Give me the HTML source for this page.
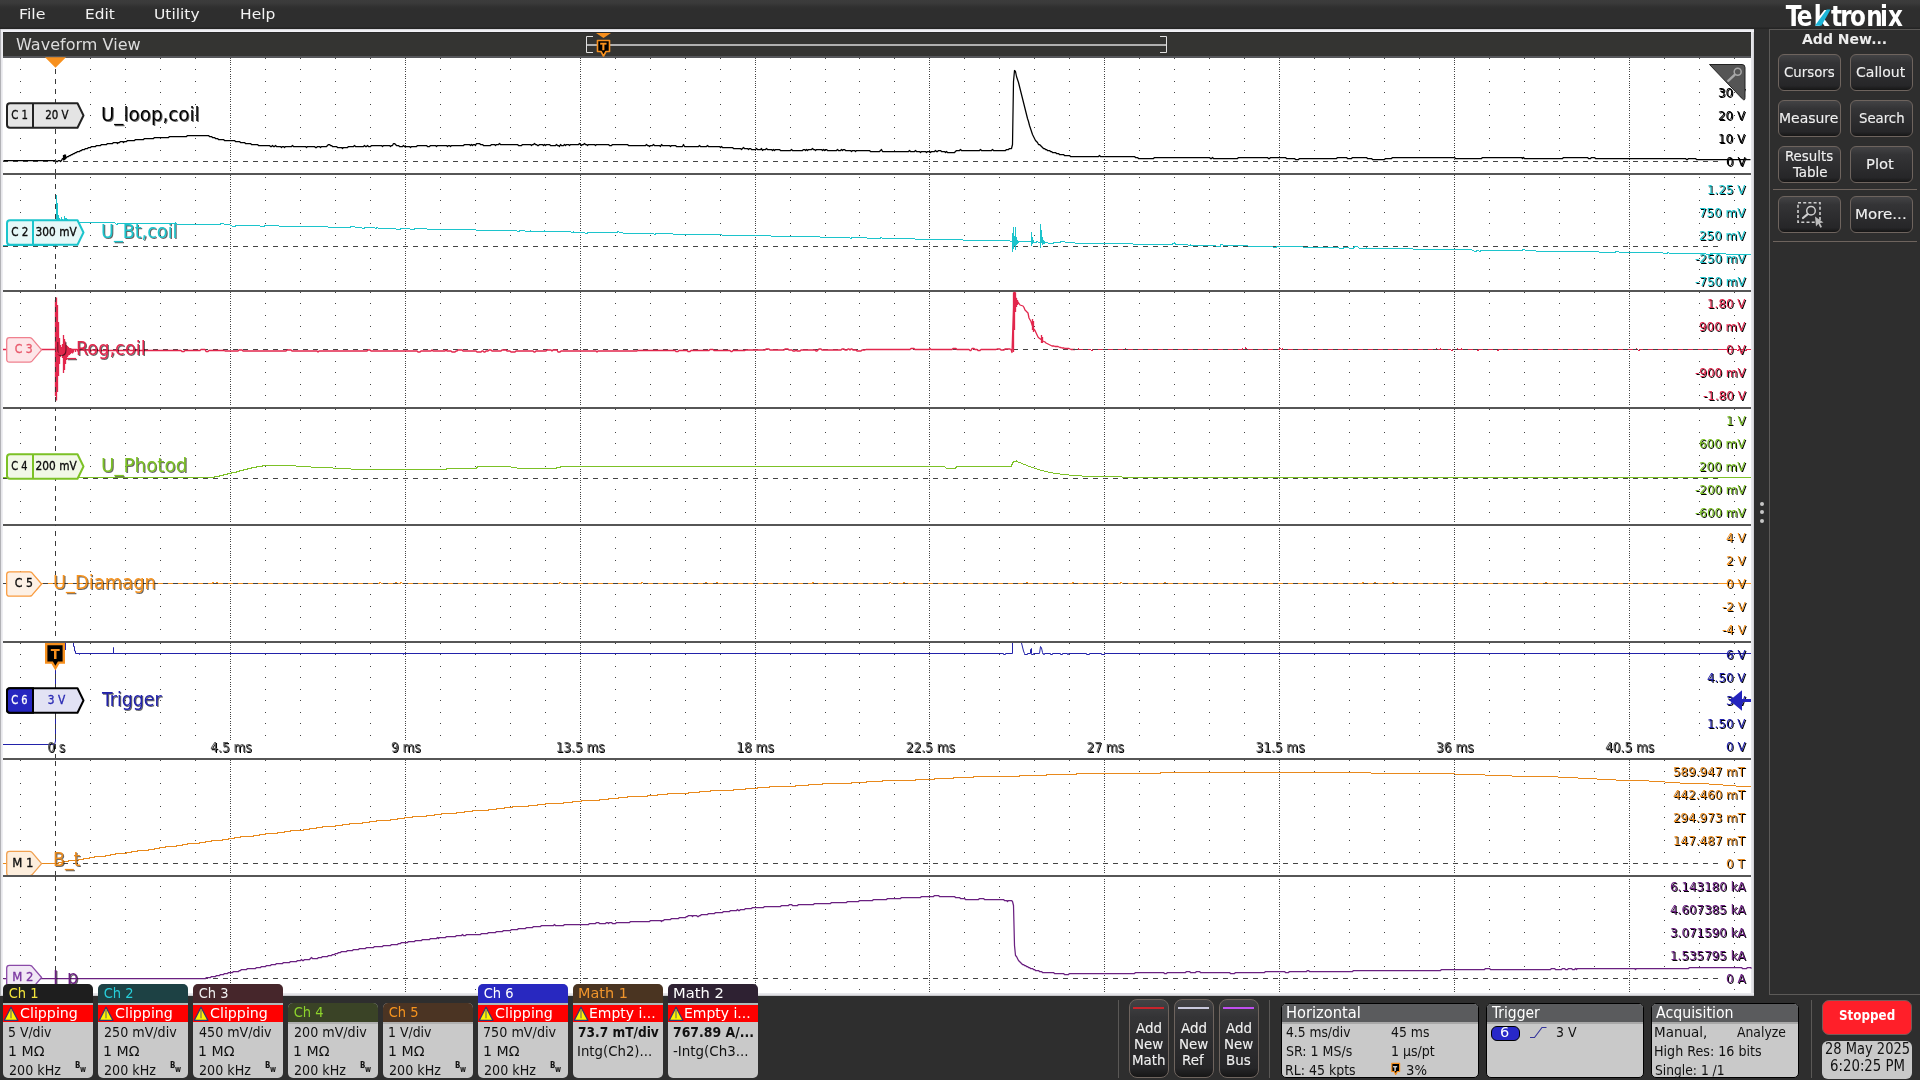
<!DOCTYPE html>
<html lang="en"><head><meta charset="utf-8"><title>Tektronix Waveform View</title>
<style>
html,body{margin:0;padding:0;background:#2e2e2e}
body{width:1920px;height:1080px;position:relative;overflow:hidden;font-family:'DejaVu Sans Condensed','DejaVu Sans','Liberation Sans',sans-serif}
.t{position:absolute;white-space:nowrap;line-height:1;transform-origin:0 0;display:block}
.tl{position:absolute;left:0;top:0;width:1920px;height:1080px;will-change:transform;pointer-events:none}
.abs{position:absolute}
svg.ov{position:absolute;left:0;top:0;width:1920px;height:1080px;pointer-events:none;will-change:transform}
#menubar{position:absolute;left:0;top:0;width:1920px;height:29px;background:linear-gradient(#3c3c3c 0,#3a3a3a 3px,#303030 7px,#2e2e2e 10px,#2e2e2e 27px,#232323 28px,#262626 29px)}
#wfv{position:absolute;left:0;top:29px;width:1754px;height:967px;background:linear-gradient(90deg,#aeaeb2 0,#b6b6ba 1px,#e6e6ea 1.4px,#f2f2f6 3px,#e8e8ec 1751px,#e0e0e4 1753px,#c4c4c8 1754px)}
#wfv .edge-t{position:absolute;left:1px;top:0;width:1753px;height:3px;background:linear-gradient(#cfcfd3,#ececf0 45%,#f5f5f9)}
#wfv .edge-b{position:absolute;left:1px;top:964px;width:1753px;height:3px;background:linear-gradient(#ececf0,#e2e2e6 50%,#b8b8bc)}
#wfv .title{position:absolute;left:3px;top:3px;width:1748px;height:26px;background:#343432;border-top:1px solid #2a2a2a;border-bottom:2px solid #56575b;box-sizing:border-box}
#wfv .plot{position:absolute;left:3px;top:29px;width:1748px;height:935px;background:#fff}
#layers{position:absolute;left:0;top:0;width:1920px;height:993px;overflow:hidden}
#side{position:absolute;left:1769px;top:29px;width:160px;height:966px;box-sizing:border-box;border:1px solid #5c5a58;background:#2e2e2e}
.btn{position:absolute;box-sizing:border-box;border:1px solid #6e645e;border-radius:6px;background:linear-gradient(#434345 0,#343436 22%,#2c2c2e 60%,#262628 88%,#161616 100%)}
.hr{position:absolute;height:1px;background:#6e645e}
.vr{position:absolute;width:1px;background:#5a5856}
.chb{position:absolute;width:90px;border-radius:5px;overflow:hidden;background:#c9c9c9}
.chh{position:absolute;left:0;top:0;width:100%}
.chl{position:absolute;left:0;top:19px;width:100%;height:2px;background:#aebaba}
.chl2{position:absolute;left:0;top:19px;width:100%;height:2px;background:#b0b0b0}
.chw{position:absolute;left:0;top:21px;width:100%;height:17px;background:#ff0000}
.ib{position:absolute;box-sizing:border-box;border:1px solid #000;border-radius:5px;overflow:hidden;background:#c9c9c9}
.ib .h{position:absolute;left:0;top:0;width:100%;height:18px;background:#5a5b5d;border-bottom:2px solid #a8a8a8}
</style></head><body>
<div id="menubar"><div class="tl"><span class="t" style="left:18.91px;top:7.00px;font-size:14.5px;font-family:'DejaVu Sans','Liberation Sans',sans-serif;color:#f2f2f2;transform:scaleX(1.0924)">File</span><span class="t" style="left:84.94px;top:7.00px;font-size:14.5px;font-family:'DejaVu Sans','Liberation Sans',sans-serif;color:#f2f2f2;transform:scaleX(1.0586)">Edit</span><span class="t" style="left:153.93px;top:7.00px;font-size:14.5px;font-family:'DejaVu Sans','Liberation Sans',sans-serif;color:#f2f2f2;transform:scaleX(1.0697)">Utility</span><span class="t" style="left:239.93px;top:7.00px;font-size:14.5px;font-family:'DejaVu Sans','Liberation Sans',sans-serif;color:#f2f2f2;transform:scaleX(1.0674)">Help</span></div>
<svg class="ov" style="height:29px" viewBox="0 0 1920 29"><text transform="scale(0.88 1)" x="2029.26 2041.73 2061.07 2080.57 2091.18 2102.18 2120.73 2136.41 2145.45" y="25.7" font-family="DejaVu Sans Condensed, DejaVu Sans, Liberation Sans, sans-serif" font-weight="bold" font-size="29.2" fill="#fff">Tektronix</text><path d="M1814.9,25.8L1826.7,9.5H1830.6L1821.4,25.8Z" fill="#1cb5d8"/></svg>
</div>
<div id="wfv"><div class="edge-t"></div><div class="edge-b"></div><div class="title"></div><div class="tl"><span class="t" style="left:16.00px;top:8.50px;font-size:15.5px;font-family:'DejaVu Sans','Liberation Sans',sans-serif;color:#dcdcdc;transform:scaleX(1.0355)">Waveform View</span></div><div class="plot"></div></div>
<div id="layers">
<svg class="ov" viewBox="0 0 1920 1080"><defs><path id="mn" d="M0,58.5h1M0,69.5h1M0,81.5h1M0,92.5h1M0,104.5h1M0,115.5h1M0,127.5h1M0,138.5h1M0,150.5h1M0,177.5h1M0,189.5h1M0,200.5h1M0,212.5h1M0,223.5h1M0,235.5h1M0,258.5h1M0,269.5h1M0,281.5h1M0,292.5h1M0,303.5h1M0,315.5h1M0,326.5h1M0,338.5h1M0,361.5h1M0,372.5h1M0,384.5h1M0,395.5h1M0,409.5h1M0,420.5h1M0,432.5h1M0,443.5h1M0,455.5h1M0,466.5h1M0,489.5h1M0,501.5h1M0,512.5h1M0,537.5h1M0,548.5h1M0,560.5h1M0,571.5h1M0,594.5h1M0,606.5h1M0,617.5h1M0,629.5h1M0,643.5h1M0,654.5h1M0,666.5h1M0,677.5h1M0,689.5h1M0,700.5h1M0,712.5h1M0,723.5h1M0,735.5h1M0,760.5h1M0,771.5h1M0,783.5h1M0,794.5h1M0,806.5h1M0,817.5h1M0,829.5h1M0,840.5h1M0,852.5h1M0,886.5h1M0,897.5h1M0,909.5h1M0,920.5h1M0,932.5h1M0,943.5h1M0,955.5h1M0,966.5h1M0,989.5h1"/><path id="mj" d="M0,58.5h1M0,60.5h1M0,62.5h1M0,64.5h1M0,67.5h1M0,69.5h1M0,71.5h1M0,74.5h1M0,76.5h1M0,78.5h1M0,81.5h1M0,83.5h1M0,85.5h1M0,87.5h1M0,90.5h1M0,92.5h1M0,94.5h1M0,97.5h1M0,99.5h1M0,101.5h1M0,104.5h1M0,106.5h1M0,108.5h1M0,110.5h1M0,113.5h1M0,115.5h1M0,117.5h1M0,120.5h1M0,122.5h1M0,124.5h1M0,127.5h1M0,129.5h1M0,131.5h1M0,133.5h1M0,136.5h1M0,138.5h1M0,140.5h1M0,143.5h1M0,145.5h1M0,147.5h1M0,150.5h1M0,152.5h1M0,154.5h1M0,156.5h1M0,159.5h1M0,161.5h1M0,163.5h1M0,166.5h1M0,168.5h1M0,170.5h1M0,175.5h1M0,177.5h1M0,179.5h1M0,182.5h1M0,184.5h1M0,186.5h1M0,189.5h1M0,191.5h1M0,193.5h1M0,196.5h1M0,198.5h1M0,200.5h1M0,202.5h1M0,205.5h1M0,207.5h1M0,209.5h1M0,212.5h1M0,214.5h1M0,216.5h1M0,219.5h1M0,221.5h1M0,223.5h1M0,225.5h1M0,228.5h1M0,230.5h1M0,232.5h1M0,235.5h1M0,237.5h1M0,239.5h1M0,242.5h1M0,244.5h1M0,246.5h1M0,248.5h1M0,251.5h1M0,253.5h1M0,255.5h1M0,258.5h1M0,260.5h1M0,262.5h1M0,265.5h1M0,267.5h1M0,269.5h1M0,271.5h1M0,274.5h1M0,276.5h1M0,278.5h1M0,281.5h1M0,283.5h1M0,285.5h1M0,288.5h1M0,292.5h1M0,294.5h1M0,296.5h1M0,298.5h1M0,301.5h1M0,303.5h1M0,305.5h1M0,308.5h1M0,310.5h1M0,312.5h1M0,315.5h1M0,317.5h1M0,319.5h1M0,321.5h1M0,324.5h1M0,326.5h1M0,328.5h1M0,331.5h1M0,333.5h1M0,335.5h1M0,338.5h1M0,340.5h1M0,342.5h1M0,344.5h1M0,347.5h1M0,349.5h1M0,351.5h1M0,354.5h1M0,356.5h1M0,358.5h1M0,361.5h1M0,363.5h1M0,365.5h1M0,367.5h1M0,370.5h1M0,372.5h1M0,374.5h1M0,377.5h1M0,379.5h1M0,381.5h1M0,384.5h1M0,386.5h1M0,388.5h1M0,390.5h1M0,393.5h1M0,395.5h1M0,397.5h1M0,400.5h1M0,402.5h1M0,404.5h1M0,409.5h1M0,411.5h1M0,413.5h1M0,416.5h1M0,418.5h1M0,420.5h1M0,423.5h1M0,425.5h1M0,427.5h1M0,429.5h1M0,432.5h1M0,434.5h1M0,436.5h1M0,439.5h1M0,441.5h1M0,443.5h1M0,446.5h1M0,448.5h1M0,450.5h1M0,452.5h1M0,455.5h1M0,457.5h1M0,459.5h1M0,462.5h1M0,464.5h1M0,466.5h1M0,469.5h1M0,471.5h1M0,473.5h1M0,475.5h1M0,478.5h1M0,480.5h1M0,482.5h1M0,485.5h1M0,487.5h1M0,489.5h1M0,492.5h1M0,494.5h1M0,496.5h1M0,498.5h1M0,501.5h1M0,503.5h1M0,505.5h1M0,508.5h1M0,510.5h1M0,512.5h1M0,515.5h1M0,517.5h1M0,519.5h1M0,521.5h1M0,528.5h1M0,530.5h1M0,532.5h1M0,534.5h1M0,537.5h1M0,539.5h1M0,541.5h1M0,544.5h1M0,546.5h1M0,548.5h1M0,551.5h1M0,553.5h1M0,555.5h1M0,557.5h1M0,560.5h1M0,562.5h1M0,564.5h1M0,567.5h1M0,569.5h1M0,571.5h1M0,574.5h1M0,576.5h1M0,578.5h1M0,580.5h1M0,583.5h1M0,585.5h1M0,587.5h1M0,590.5h1M0,592.5h1M0,594.5h1M0,597.5h1M0,599.5h1M0,601.5h1M0,603.5h1M0,606.5h1M0,608.5h1M0,610.5h1M0,613.5h1M0,615.5h1M0,617.5h1M0,620.5h1M0,622.5h1M0,624.5h1M0,626.5h1M0,629.5h1M0,631.5h1M0,633.5h1M0,636.5h1M0,638.5h1M0,643.5h1M0,645.5h1M0,647.5h1M0,649.5h1M0,652.5h1M0,654.5h1M0,656.5h1M0,659.5h1M0,661.5h1M0,663.5h1M0,666.5h1M0,668.5h1M0,670.5h1M0,672.5h1M0,675.5h1M0,677.5h1M0,679.5h1M0,682.5h1M0,684.5h1M0,686.5h1M0,689.5h1M0,691.5h1M0,693.5h1M0,695.5h1M0,698.5h1M0,700.5h1M0,702.5h1M0,705.5h1M0,707.5h1M0,709.5h1M0,712.5h1M0,714.5h1M0,716.5h1M0,718.5h1M0,721.5h1M0,723.5h1M0,725.5h1M0,728.5h1M0,730.5h1M0,732.5h1M0,735.5h1M0,737.5h1M0,739.5h1M0,741.5h1M0,760.5h1M0,762.5h1M0,764.5h1M0,767.5h1M0,769.5h1M0,771.5h1M0,774.5h1M0,776.5h1M0,778.5h1M0,780.5h1M0,783.5h1M0,785.5h1M0,787.5h1M0,790.5h1M0,792.5h1M0,794.5h1M0,797.5h1M0,799.5h1M0,801.5h1M0,803.5h1M0,806.5h1M0,808.5h1M0,810.5h1M0,813.5h1M0,815.5h1M0,817.5h1M0,820.5h1M0,822.5h1M0,824.5h1M0,826.5h1M0,829.5h1M0,831.5h1M0,833.5h1M0,836.5h1M0,838.5h1M0,840.5h1M0,843.5h1M0,845.5h1M0,847.5h1M0,849.5h1M0,852.5h1M0,854.5h1M0,856.5h1M0,859.5h1M0,861.5h1M0,863.5h1M0,866.5h1M0,868.5h1M0,870.5h1M0,872.5h1M0,879.5h1M0,881.5h1M0,883.5h1M0,886.5h1M0,888.5h1M0,890.5h1M0,892.5h1M0,895.5h1M0,897.5h1M0,899.5h1M0,902.5h1M0,904.5h1M0,906.5h1M0,909.5h1M0,911.5h1M0,913.5h1M0,915.5h1M0,918.5h1M0,920.5h1M0,922.5h1M0,925.5h1M0,927.5h1M0,929.5h1M0,932.5h1M0,934.5h1M0,936.5h1M0,938.5h1M0,941.5h1M0,943.5h1M0,945.5h1M0,948.5h1M0,950.5h1M0,952.5h1M0,955.5h1M0,957.5h1M0,959.5h1M0,961.5h1M0,964.5h1M0,966.5h1M0,968.5h1M0,971.5h1M0,973.5h1M0,975.5h1M0,978.5h1M0,980.5h1M0,982.5h1M0,984.5h1M0,987.5h1M0,989.5h1M0,991.5h1"/></defs>
<g stroke="#444" stroke-width="1" fill="none" shape-rendering="crispEdges">
<use href="#mn" x="20"/>
<use href="#mn" x="90"/>
<use href="#mn" x="125"/>
<use href="#mn" x="160"/>
<use href="#mn" x="195"/>
<use href="#mn" x="265"/>
<use href="#mn" x="300"/>
<use href="#mn" x="335"/>
<use href="#mn" x="370"/>
<use href="#mn" x="440"/>
<use href="#mn" x="475"/>
<use href="#mn" x="510"/>
<use href="#mn" x="545"/>
<use href="#mn" x="615"/>
<use href="#mn" x="650"/>
<use href="#mn" x="685"/>
<use href="#mn" x="720"/>
<use href="#mn" x="790"/>
<use href="#mn" x="825"/>
<use href="#mn" x="859"/>
<use href="#mn" x="894"/>
<use href="#mn" x="964"/>
<use href="#mn" x="999"/>
<use href="#mn" x="1034"/>
<use href="#mn" x="1069"/>
<use href="#mn" x="1139"/>
<use href="#mn" x="1174"/>
<use href="#mn" x="1209"/>
<use href="#mn" x="1244"/>
<use href="#mn" x="1314"/>
<use href="#mn" x="1349"/>
<use href="#mn" x="1384"/>
<use href="#mn" x="1419"/>
<use href="#mn" x="1489"/>
<use href="#mn" x="1524"/>
<use href="#mn" x="1559"/>
<use href="#mn" x="1594"/>
<use href="#mn" x="1664"/>
<use href="#mn" x="1699"/>
<use href="#mn" x="1734"/>
<use href="#mj" x="230"/>
<use href="#mj" x="405"/>
<use href="#mj" x="580"/>
<use href="#mj" x="755"/>
<use href="#mj" x="929"/>
<use href="#mj" x="1104"/>
<use href="#mj" x="1279"/>
<use href="#mj" x="1454"/>
<use href="#mj" x="1629"/>
</g>
<rect x="3" y="173" width="1748" height="2" fill="#565656"/>
<rect x="3" y="290" width="1748" height="2" fill="#565656"/>
<rect x="3" y="407" width="1748" height="2" fill="#565656"/>
<rect x="3" y="524" width="1748" height="2" fill="#565656"/>
<rect x="3" y="641" width="1748" height="2" fill="#565656"/>
<rect x="3" y="758" width="1748" height="2" fill="#565656"/>
<rect x="3" y="875" width="1748" height="2" fill="#565656"/>
<path d="M3,161.5H1718" stroke="#444" stroke-width="1" stroke-dasharray="5 5" fill="none" shape-rendering="crispEdges"/>
<path d="M3,246.5H1718" stroke="#444" stroke-width="1" stroke-dasharray="5 5" fill="none" shape-rendering="crispEdges"/>
<path d="M3,349.5H1718" stroke="#444" stroke-width="1" stroke-dasharray="5 5" fill="none" shape-rendering="crispEdges"/>
<path d="M3,478.5H1718" stroke="#444" stroke-width="1" stroke-dasharray="5 5" fill="none" shape-rendering="crispEdges"/>
<path d="M3,863.5H1718" stroke="#444" stroke-width="1" stroke-dasharray="5 5" fill="none" shape-rendering="crispEdges"/>
<path d="M3,978.5H1718" stroke="#444" stroke-width="1" stroke-dasharray="5 5" fill="none" shape-rendering="crispEdges"/></svg>
<div class="abs" style="left:3px;top:741px;width:1748px;height:17px;background:#fff"></div>
<svg class="ov" viewBox="0 0 1920 1080"><g fill="none" stroke-width="1" stroke-linejoin="round">
<path d="M3.5,160.5L55.5,160.5L56.5,161.5L57.5,161.5L58.5,160.5L59.5,160.5L60.5,161.5L61.5,160.5L62.5,158.5L63.5,158.5L64.5,159.5L67.5,156.5L68.5,156.5L69.5,155.5L70.5,155.5L71.5,154.5L72.5,154.5L73.5,153.5L74.5,153.5L75.5,152.5L76.5,152.5L77.5,151.5L79.5,151.5L80.5,150.5L81.5,150.5L82.5,149.5L84.5,149.5L85.5,148.5L87.5,148.5L88.5,147.5L90.5,147.5L91.5,146.5L95.5,146.5L96.5,145.5L100.5,145.5L101.5,144.5L106.5,144.5L107.5,143.5L112.5,143.5L113.5,142.5L116.5,142.5L117.5,143.5L118.5,142.5L119.5,142.5L120.5,141.5L122.5,141.5L123.5,142.5L124.5,141.5L126.5,141.5L127.5,140.5L134.5,140.5L135.5,139.5L143.5,139.5L144.5,138.5L153.5,138.5L154.5,137.5L168.5,137.5L169.5,136.5L186.5,136.5L187.5,135.5L208.5,135.5L209.5,136.5L211.5,136.5L212.5,137.5L214.5,137.5L215.5,138.5L217.5,138.5L218.5,139.5L223.5,139.5L224.5,140.5L234.5,140.5L235.5,141.5L239.5,141.5L240.5,142.5L244.5,142.5L245.5,143.5L250.5,143.5L251.5,144.5L257.5,144.5L258.5,145.5L269.5,145.5L270.5,146.5L271.5,146.5L272.5,145.5L273.5,146.5L274.5,146.5L275.5,145.5L276.5,146.5L280.5,146.5L281.5,147.5L282.5,146.5L283.5,146.5L284.5,147.5L285.5,146.5L291.5,146.5L292.5,145.5L293.5,146.5L305.5,146.5L306.5,147.5L307.5,146.5L314.5,146.5L315.5,147.5L316.5,147.5L317.5,146.5L319.5,146.5L320.5,147.5L321.5,146.5L326.5,146.5L328.5,144.5L329.5,144.5L330.5,145.5L331.5,145.5L332.5,146.5L336.5,146.5L337.5,147.5L341.5,147.5L342.5,148.5L343.5,147.5L347.5,147.5L348.5,146.5L353.5,146.5L354.5,145.5L355.5,146.5L363.5,146.5L364.5,145.5L365.5,146.5L366.5,146.5L367.5,145.5L368.5,146.5L370.5,146.5L371.5,145.5L381.5,145.5L382.5,146.5L383.5,145.5L389.5,145.5L390.5,146.5L391.5,145.5L392.5,145.5L393.5,143.5L394.5,143.5L396.5,145.5L398.5,145.5L399.5,146.5L402.5,146.5L403.5,145.5L404.5,146.5L409.5,146.5L410.5,147.5L411.5,146.5L416.5,146.5L417.5,145.5L426.5,145.5L427.5,146.5L429.5,146.5L430.5,145.5L435.5,145.5L436.5,146.5L437.5,145.5L446.5,145.5L447.5,146.5L448.5,145.5L449.5,145.5L450.5,146.5L451.5,145.5L463.5,145.5L464.5,144.5L469.5,144.5L470.5,145.5L471.5,144.5L472.5,145.5L473.5,144.5L474.5,144.5L475.5,145.5L476.5,143.5L479.5,143.5L480.5,144.5L482.5,144.5L483.5,145.5L490.5,145.5L491.5,144.5L494.5,144.5L495.5,145.5L496.5,144.5L498.5,144.5L499.5,143.5L500.5,144.5L517.5,144.5L518.5,145.5L521.5,145.5L522.5,144.5L530.5,144.5L531.5,145.5L532.5,144.5L533.5,144.5L534.5,143.5L535.5,144.5L536.5,144.5L537.5,145.5L538.5,145.5L539.5,144.5L542.5,144.5L543.5,145.5L544.5,144.5L545.5,145.5L546.5,144.5L549.5,144.5L550.5,145.5L555.5,145.5L556.5,144.5L557.5,145.5L558.5,145.5L559.5,146.5L560.5,144.5L561.5,145.5L563.5,145.5L564.5,144.5L565.5,145.5L566.5,144.5L568.5,144.5L569.5,145.5L570.5,144.5L578.5,144.5L579.5,143.5L581.5,145.5L582.5,144.5L583.5,144.5L584.5,143.5L585.5,144.5L586.5,144.5L587.5,145.5L588.5,144.5L594.5,144.5L595.5,145.5L596.5,144.5L608.5,144.5L609.5,145.5L611.5,145.5L612.5,144.5L627.5,144.5L628.5,145.5L645.5,145.5L646.5,144.5L647.5,145.5L648.5,145.5L649.5,146.5L650.5,145.5L652.5,145.5L653.5,144.5L654.5,145.5L659.5,145.5L660.5,146.5L661.5,144.5L662.5,145.5L669.5,145.5L670.5,146.5L671.5,145.5L675.5,145.5L676.5,146.5L682.5,146.5L683.5,144.5L684.5,146.5L698.5,146.5L699.5,145.5L700.5,146.5L706.5,146.5L707.5,145.5L708.5,146.5L719.5,146.5L720.5,147.5L721.5,146.5L722.5,147.5L732.5,147.5L733.5,148.5L740.5,148.5L741.5,149.5L743.5,147.5L744.5,148.5L747.5,148.5L748.5,149.5L749.5,148.5L750.5,148.5L751.5,149.5L755.5,149.5L756.5,148.5L757.5,149.5L760.5,149.5L761.5,148.5L762.5,150.5L763.5,149.5L765.5,149.5L766.5,148.5L767.5,149.5L771.5,149.5L772.5,150.5L773.5,149.5L774.5,150.5L775.5,149.5L779.5,149.5L780.5,150.5L790.5,150.5L791.5,149.5L792.5,150.5L802.5,150.5L803.5,149.5L804.5,149.5L805.5,150.5L806.5,149.5L807.5,150.5L808.5,149.5L811.5,149.5L812.5,148.5L813.5,149.5L814.5,149.5L815.5,150.5L816.5,149.5L821.5,149.5L822.5,150.5L823.5,149.5L824.5,150.5L825.5,149.5L826.5,149.5L827.5,150.5L836.5,150.5L837.5,149.5L838.5,150.5L840.5,150.5L841.5,149.5L842.5,150.5L843.5,149.5L844.5,149.5L845.5,150.5L850.5,150.5L851.5,151.5L852.5,150.5L854.5,150.5L855.5,151.5L856.5,150.5L869.5,150.5L870.5,151.5L879.5,151.5L881.5,149.5L882.5,151.5L908.5,151.5L909.5,150.5L910.5,151.5L914.5,151.5L915.5,150.5L916.5,151.5L919.5,151.5L920.5,152.5L921.5,151.5L925.5,151.5L926.5,152.5L927.5,151.5L929.5,151.5L930.5,152.5L931.5,151.5L934.5,151.5L935.5,150.5L936.5,151.5L937.5,151.5L938.5,150.5L940.5,150.5L941.5,151.5L944.5,151.5L945.5,152.5L946.5,151.5L947.5,152.5L954.5,152.5L956.5,150.5L959.5,150.5L960.5,149.5L961.5,150.5L979.5,150.5L980.5,149.5L981.5,150.5L991.5,150.5L992.5,149.5L993.5,150.5L1005.5,150.5L1006.5,149.5L1008.5,149.5L1009.5,148.5L1011.5,148.5L1012.5,144.5L1013.5,81.5L1014.5,70.5L1015.5,71.5L1016.5,76.5L1018.5,82.5L1027.5,118.5L1028.5,121.5L1029.5,125.5L1032.5,134.5L1035.5,140.5L1037.5,142.5L1038.5,144.5L1039.5,144.5L1043.5,148.5L1044.5,148.5L1045.5,149.5L1046.5,149.5L1047.5,150.5L1049.5,150.5L1050.5,151.5L1051.5,151.5L1052.5,152.5L1055.5,152.5L1056.5,153.5L1058.5,153.5L1059.5,154.5L1063.5,154.5L1064.5,155.5L1069.5,155.5L1070.5,156.5L1098.5,156.5L1099.5,155.5L1100.5,156.5L1134.5,156.5L1135.5,157.5L1137.5,157.5L1138.5,158.5L1153.5,158.5L1154.5,157.5L1209.5,157.5L1210.5,158.5L1211.5,158.5L1212.5,157.5L1213.5,158.5L1237.5,158.5L1238.5,157.5L1267.5,157.5L1268.5,158.5L1269.5,158.5L1270.5,157.5L1285.5,157.5L1286.5,158.5L1294.5,158.5L1295.5,159.5L1298.5,159.5L1299.5,158.5L1336.5,158.5L1337.5,157.5L1346.5,157.5L1347.5,158.5L1351.5,158.5L1352.5,157.5L1366.5,157.5L1367.5,158.5L1371.5,158.5L1372.5,159.5L1384.5,159.5L1385.5,158.5L1391.5,158.5L1392.5,157.5L1454.5,157.5L1455.5,158.5L1481.5,158.5L1482.5,157.5L1521.5,157.5L1522.5,158.5L1523.5,157.5L1524.5,158.5L1562.5,158.5L1563.5,157.5L1587.5,157.5L1588.5,158.5L1590.5,158.5L1591.5,157.5L1594.5,157.5L1595.5,158.5L1685.5,158.5L1686.5,159.5L1687.5,159.5L1688.5,158.5L1695.5,158.5L1696.5,159.5L1750.5,159.5M63.5,155V160.5M64.5,154.5V160M65.5,154.5V158" stroke="#000" stroke-width="1.25"/>
<path d="M3,245.5H56V222.5H115V223.5H116V224.5H117V223.5H175V222.5H176V223.5H177V224.5H220V223.5H224V224.5H230V225.5H232V226.5H235V225.5H260V226.5H264V225.5H279V226.5H328V227.5H350V226.5H355V227.5H362V228.5H364V227.5H375V228.5H376V227.5H378V228.5H396V229.5H400V228.5H410V229.5H414V228.5H427V229.5H476V230.5H517V231.5H519V230.5H525V231.5H530V230.5H531V231.5H544V230.5H545V231.5H571V232.5H573V231.5H574V232.5H585V233.5H587V232.5H617V231.5H619V232.5H623V233.5H654V234.5H655V233.5H673V234.5H722V235.5H771V236.5H820V237.5H850V238.5H851V237.5H867V238.5H880V237.5H882V238.5H915V239.5H963V240.5H1010V241.5H1012V242.5H1013V241.5H1034V242.5H1036V241.5H1038V242.5H1041V241.5H1044V242.5H1048V243.5H1053V242.5H1060V241.5H1065V242.5H1075V243.5H1133V244.5H1172V243.5H1174V242.5H1175V244.5H1188V245.5H1190V244.5H1191V245.5H1216V246.5H1220V244.5H1223V245.5H1248V246.5H1273V247.5H1276V246.5H1303V247.5H1339V248.5H1343V247.5H1349V248.5H1353V247.5H1354V246.5H1358V247.5H1359V248.5H1366V247.5H1367V248.5H1413V249.5H1472V250.5H1474V251.5H1476V250.5H1479V251.5H1480V250.5H1522V249.5H1525V250.5H1536V251.5H1599V252.5H1615V251.5H1619V252.5H1663V253.5H1667V252.5H1669V253.5H1706V254.5H1710V253.5H1726V254.5H1751M56.5,222.5V194.5M57.5,203V222.5M58.5,215V222.5M59.5,217.5V222.5M61.5,216.5V222.5M62.5,218.5V222M64.5,216V222.5M65.5,218V222M66.5,217.5V222M67.5,219V222M68.5,220V222.5M1012.5,233V251.5M1013.5,226.7V249M1014.5,236V246M1015.5,226.5V249.5M1016.5,237V245M1017.5,239.5V244M1018.5,240.5V243M1031.5,232V245.5M1032.5,236.5V244M1033.5,239.5V243M1040.5,223.5V247.5M1041.5,230V241.5M1042.5,236.5V244.5M1043.5,239.5V244M1044.5,240.5V243.5" stroke="#1cc4cc" shape-rendering="crispEdges"/>
<path d="M3,349.5L77,349.5L78,350L90,350L91,351L92,350L93,350L94,350.5L127,350.5L128,349.5L129,349.5L130,350.5L181,350.5L182,351.5L184,351.5L185,350.5L200,350.5L201,349.5L205,349.5L206,351.5L208,351.5L209,350.5L224,350.5L225,351L238,351L239,350L242,350L243,351L286,351L287,350L291,350L292,351L317,351L318,352L319,351L367,351L368,350L370,350L371,351L417,351L418,352L420,352L421,351L431,351L432,350L433,351L445,351L446,350L447,351L451,351L452,352L455,352L456,351L457,351L458,350L462,350L463,351L476,351L477,352L481,352L482,351L483,351L484,352L485,352L486,351L488,351L489,350L491,350L492,351L501,351L502,350L506,350L507,351L510,351L511,352L515,352L516,351L533,351L534,352L535,352L536,351L546,351L547,350L551,350L552,351L553,350L557,350L558,352L560,352L561,351L596,351L597,352L598,351L637,351L638,350.5L675,350.5L676,351.5L678,351.5L679,350.5L687,350.5L688,351.5L690,351.5L691,350.5L709,350.5L710,349.5L713,349.5L714,350.5L730,350.5L731,351.5L732,351.5L733,350.5L745,350.5L746,350L765,350L766,349L769,349L770,350L784,350L785,349L788,349L789,350L792,350L793,351L795,351L796,350L797,351L800,351L801,350L815,350L816,351L817,351L819,349L821,349L822,350L841,350L842,349L844,349L845,350L847,350L848,349L849,349L850,350L851,349L852,349L853,350L856,350L857,351L861,351L862,350L865,350L866,349.5L910,349.5L911,348.5L914,348.5L915,349.5L929,349.5L930,348.5L931,349.5L952,349.5L953,348.5L956,348.5L957,349.5L969,349.5L970,350.5L971,350.5L972,348.5L974,348.5L975,349.5L977,349.5L978,350.5L980,350.5L981,349.5L996,349.5L997,349L1000,349L1001,350L1004,350L1005,349L1010,349L1011,349.5L1012,352.5L1014,292.5L1015,292.5L1016,300L1018,302L1020,305L1023,306L1024,307.5L1025,310L1028,313L1029,318L1031,321.5L1033,328L1035,330.5L1038,337L1039,338L1043,341L1045,342L1046,343L1052,346L1054,346L1055,346.5L1058,346.5L1060,347.5L1061,347.5L1062,348L1064,348L1065,348.5L1069,348.5L1071,349.5L1075,349.5M55.5,300V396M56.5,297.5V400.5M57.5,305V392M58.5,322V376M59.5,338V364M60.5,345V357M61.5,347V354M62.5,344V358M63.5,335V373M64.5,339V370M65.5,343V364M66.5,345V360M67.5,346V357M68.5,347V355.5M69.5,348V355M70.5,348V354M71.5,348.5V353M72.5,349V353.5M73.5,349V352.5M75.5,349V352M77.5,349V351.5M1013.5,292.5V352M1014.5,292.5V330M1015.5,292.5V312M1016.5,298V307M1017.5,300V305M1032.5,319V330M1033.5,321V332M1041.5,335V343M1042.5,337V343" stroke="#e2264c" stroke-width="1.3"/>
<path d="M1075,349.5H1078V348.5H1079V349.5H1091V350.5H1092V349.5H1125V348.5H1126V349.5H1242V348.5H1243V349.5H1245V347.5H1246V349.5H1279V348.5H1281V349.5H1282V348.5H1283V349.5H1436V348.5H1437V349.5H1440V348.5H1441V349.5H1451V350.5H1452V349.5H1457V348.5H1458V349.5H1461V348.5H1462V349.5H1477V350.5H1478V349.5H1497V350.5H1498V349.5H1636V348.5H1637V349.5H1638V350.5H1639V349.5H1737V350.5H1738V349.5H1744V350.5H1746V349.5H1751" stroke="#e2264c" shape-rendering="crispEdges"/>
<path d="M3,477.5H214V476.5H219V475.5H223V474.5H227V473.5H231V472.5H236V471.5H239V470.5H243V469.5H247V468.5H251V467.5H256V466.5H262V465.5H296V466.5H311V467.5H333V468.5H351V469.5H446V468.5H476V467.5H477V466.5H511V467.5H517V468.5H556V467.5H560V466.5H945V467.5H946V468.5H955V467.5H956V466.5H1011V464.5H1012V462.5H1013V461.5H1016V460.5H1017V461.5H1018V462.5H1021V463.5H1023V464.5H1026V465.5H1028V466.5H1031V467.5H1034V468.5H1037V469.5H1040V470.5H1044V471.5H1048V472.5H1053V473.5H1060V474.5H1069V475.5H1082V476.5H1122V477.5H1751" stroke="#7cc126" shape-rendering="crispEdges"/>
<path d="M3,583.5H212V582.5H214V583.5H216V582.5H218V583.5H379V582.5H381V583.5H395V582.5H397V583.5H400V582.5H402V583.5H559V582.5H561V583.5H641V582.5H643V583.5H705V582.5H707V583.5H716V582.5H718V583.5H812V582.5H814V583.5H889V582.5H891V583.5H903V582.5H905V583.5H1026V582.5H1028V583.5H1072V582.5H1074V583.5H1120V582.5H1122V583.5H1164V582.5H1166V583.5H1362V582.5H1364V583.5H1374V582.5H1376V583.5H1392V582.5H1394V583.5H1545V582.5H1547V583.5H1751" stroke="#f7931e" shape-rendering="crispEdges"/>
<path d="M3,744.5H54.5L55.5,741V643M65.5,643V650M73.5,643V646.5H74.5V651H75.5V653.5H79.5V654.5V653.5H113.5V647.5V653.5H403.5V654.5V653.5H1003.5V654.5H1005.5V653.5H1012.5V643M1021.5,643L1022.5,647L1023.5,651L1024.5,653.5V654.5H1027.5V653.5H1030.5V649.5L1031.5,648.5V653.5V654.5H1033.5V653.5H1039.5L1040.5,646.5L1041.5,648L1042.5,652.5V653.5H1043.5V654.5H1044.5V653.5H1050.5V654.5H1052.5V653.5H1060.5V654.5H1062.5V653.5H1067.5V654.5H1068.5V653.5H1086.5V654.5H1089.5V653.5H1101.5V654.5H1104.5V653.5H1751" stroke="#2222aa"/>
<path d="M3,863.5H55L55,863.5H58V862.5H63V861.5H68V860.5H78V859.5H83V858.5H89V857.5H94V856.5H105V855.5H110V854.5H115V853.5H126V852.5H131V851.5H137V850.5H148V849.5H154V848.5H159V847.5H165V846.5H176V845.5H182V844.5H187V843.5H199V842.5H205V841.5H211V840.5H222V839.5H228V838.5H234V837.5H240V836.5H253V835.5H259V834.5H265V833.5H277V832.5H284V831.5H290V830.5H303V829.5H309V828.5H316V827.5H322V826.5H335V825.5H342V824.5H349V823.5H362V822.5H369V821.5H376V820.5H390V819.5H397V818.5H404V817.5H412V816.5H426V815.5H434V814.5H441V813.5H456V812.5H464V811.5H472V810.5H488V809.5H496V808.5H504V807.5H512V806.5H528V805.5H537V804.5H545V803.5H563V802.5H572V801.5H581V800.5H599V799.5H608V798.5H618V797.5H627V796.5H647V795.5H657V794.5H667V793.5H688V792.5H699V791.5H710V790.5H733V789.5H745V788.5H757V787.5H769V786.5H795V785.5H808V784.5H822V783.5H851V782.5H866V781.5H882V780.5H915V779.5H934V778.5H953V777.5H973V776.5H1019V775.5H1046V774.5H1076V773.5H1160V772.5H1371V773.5H1455V774.5H1485V775.5H1512V776.5H1558V777.5H1578V778.5H1597V779.5H1616V780.5H1649V781.5H1665V782.5H1680V783.5H1709V784.5H1723V785.5H1736V786.5H1751" stroke="#e8891c" shape-rendering="crispEdges"/>
<path d="M3.5,978.5L205.5,978.5L206.5,977.5L210.5,977.5L211.5,976.5L215.5,976.5L216.5,975.5L219.5,975.5L220.5,974.5L223.5,974.5L224.5,973.5L227.5,973.5L228.5,972.5L232.5,972.5L233.5,971.5L238.5,971.5L239.5,970.5L240.5,970.5L241.5,969.5L246.5,969.5L247.5,968.5L255.5,968.5L256.5,967.5L260.5,967.5L261.5,966.5L265.5,966.5L266.5,965.5L270.5,965.5L271.5,964.5L275.5,964.5L276.5,963.5L282.5,963.5L283.5,962.5L289.5,962.5L290.5,961.5L296.5,961.5L297.5,960.5L300.5,960.5L301.5,959.5L302.5,960.5L303.5,960.5L304.5,959.5L309.5,959.5L311.5,957.5L312.5,958.5L317.5,958.5L318.5,957.5L321.5,957.5L322.5,956.5L327.5,956.5L328.5,955.5L331.5,955.5L332.5,954.5L334.5,954.5L335.5,953.5L337.5,953.5L338.5,952.5L340.5,952.5L341.5,951.5L346.5,951.5L347.5,950.5L352.5,950.5L353.5,949.5L358.5,949.5L359.5,948.5L365.5,948.5L366.5,947.5L373.5,947.5L374.5,946.5L382.5,946.5L383.5,945.5L390.5,945.5L391.5,944.5L397.5,944.5L398.5,943.5L400.5,943.5L401.5,942.5L407.5,942.5L408.5,941.5L414.5,941.5L415.5,940.5L421.5,940.5L422.5,939.5L429.5,939.5L430.5,938.5L436.5,938.5L437.5,937.5L438.5,938.5L439.5,937.5L445.5,937.5L446.5,936.5L455.5,936.5L456.5,935.5L461.5,935.5L462.5,934.5L463.5,935.5L465.5,935.5L466.5,934.5L480.5,934.5L481.5,933.5L487.5,933.5L488.5,932.5L495.5,932.5L496.5,931.5L502.5,931.5L503.5,930.5L510.5,930.5L511.5,929.5L517.5,929.5L518.5,928.5L525.5,928.5L526.5,927.5L532.5,927.5L533.5,926.5L540.5,926.5L541.5,925.5L553.5,925.5L554.5,924.5L555.5,925.5L563.5,925.5L564.5,924.5L588.5,924.5L589.5,923.5L595.5,923.5L596.5,922.5L598.5,922.5L599.5,923.5L605.5,923.5L606.5,922.5L607.5,922.5L608.5,923.5L609.5,922.5L611.5,922.5L612.5,923.5L615.5,923.5L616.5,922.5L629.5,922.5L630.5,921.5L649.5,921.5L650.5,920.5L660.5,920.5L661.5,921.5L662.5,920.5L663.5,920.5L664.5,919.5L670.5,919.5L671.5,918.5L678.5,918.5L679.5,917.5L685.5,917.5L686.5,916.5L687.5,916.5L688.5,915.5L691.5,915.5L692.5,916.5L693.5,915.5L696.5,915.5L697.5,916.5L698.5,916.5L699.5,915.5L700.5,915.5L701.5,914.5L707.5,914.5L708.5,913.5L714.5,913.5L715.5,912.5L722.5,912.5L723.5,911.5L729.5,911.5L730.5,910.5L736.5,910.5L737.5,909.5L738.5,910.5L739.5,910.5L740.5,909.5L744.5,909.5L745.5,908.5L751.5,908.5L752.5,907.5L763.5,907.5L764.5,906.5L780.5,906.5L781.5,905.5L788.5,905.5L789.5,904.5L791.5,904.5L792.5,905.5L797.5,905.5L798.5,904.5L813.5,904.5L814.5,903.5L830.5,903.5L831.5,902.5L846.5,902.5L847.5,901.5L858.5,901.5L859.5,900.5L872.5,900.5L873.5,899.5L886.5,899.5L887.5,898.5L900.5,898.5L901.5,897.5L920.5,897.5L921.5,896.5L933.5,896.5L934.5,895.5L938.5,895.5L939.5,896.5L954.5,896.5L955.5,897.5L959.5,897.5L960.5,898.5L964.5,898.5L965.5,899.5L978.5,899.5L979.5,898.5L983.5,898.5L984.5,899.5L1003.5,899.5L1004.5,900.5L1006.5,900.5L1007.5,901.5L1008.5,900.5L1011.5,900.5L1012.5,901.5L1013.5,905.5L1014.5,945.5L1015.5,955.5L1016.5,956.5L1018.5,960.5L1022.5,964.5L1023.5,964.5L1024.5,965.5L1025.5,965.5L1026.5,966.5L1027.5,966.5L1028.5,967.5L1029.5,967.5L1030.5,968.5L1032.5,968.5L1033.5,969.5L1034.5,969.5L1035.5,970.5L1038.5,970.5L1039.5,971.5L1041.5,971.5L1042.5,972.5L1053.5,972.5L1054.5,973.5L1063.5,973.5L1064.5,974.5L1068.5,974.5L1069.5,973.5L1134.5,973.5L1135.5,972.5L1163.5,972.5L1164.5,973.5L1166.5,973.5L1167.5,972.5L1185.5,972.5L1186.5,971.5L1189.5,971.5L1190.5,972.5L1195.5,972.5L1196.5,971.5L1199.5,971.5L1200.5,972.5L1229.5,972.5L1230.5,973.5L1234.5,973.5L1235.5,972.5L1264.5,972.5L1265.5,971.5L1284.5,971.5L1285.5,972.5L1288.5,972.5L1289.5,971.5L1306.5,971.5L1307.5,970.5L1308.5,970.5L1309.5,971.5L1352.5,971.5L1353.5,970.5L1440.5,970.5L1441.5,969.5L1484.5,969.5L1485.5,968.5L1489.5,968.5L1490.5,969.5L1550.5,969.5L1551.5,968.5L1554.5,968.5L1555.5,969.5L1561.5,969.5L1562.5,968.5L1564.5,968.5L1565.5,969.5L1567.5,969.5L1568.5,968.5L1571.5,968.5L1572.5,969.5L1574.5,969.5L1575.5,968.5L1576.5,969.5L1577.5,968.5L1634.5,968.5L1635.5,969.5L1636.5,968.5L1688.5,968.5L1689.5,967.5L1741.5,967.5L1742.5,968.5L1746.5,968.5L1747.5,967.5L1750.5,967.5L1751.5,968.5" stroke="#6a2080" stroke-width="1.25"/>
</g>
<path d="M1073,349.5H1718" stroke="#444" stroke-width="1" stroke-dasharray="5 5" stroke-dashoffset="0" fill="none" shape-rendering="crispEdges"/>
<path d="M3,583.5H1718" stroke="#444" stroke-width="1" stroke-dasharray="5 5" fill="none" shape-rendering="crispEdges"/>
<path d="M55.5,59V64M55.5,69V74M55.5,79V84M55.5,89V94M55.5,99V104M55.5,109V114M55.5,119V124M55.5,129V134M55.5,139V144M55.5,149V154M55.5,159V164M55.5,169V173M55.5,174V179M55.5,184V189M55.5,194V199M55.5,204V209M55.5,214V219M55.5,224V229M55.5,234V239M55.5,244V249M55.5,254V259M55.5,264V269M55.5,274V279M55.5,284V289M55.5,291V292M55.5,297V302M55.5,307V312M55.5,317V322M55.5,327V332M55.5,337V342M55.5,347V352M55.5,357V362M55.5,367V372M55.5,377V382M55.5,387V392M55.5,397V402M55.5,408V411M55.5,416V421M55.5,426V431M55.5,436V441M55.5,446V451M55.5,456V461M55.5,466V471M55.5,476V481M55.5,486V491M55.5,496V501M55.5,506V511M55.5,516V521M55.5,525V526M55.5,531V536M55.5,541V546M55.5,551V556M55.5,561V566M55.5,571V576M55.5,581V586M55.5,591V596M55.5,601V606M55.5,611V616M55.5,621V626M55.5,631V636M55.5,644V649M55.5,654V659M55.5,664V669M55.5,674V679M55.5,684V689M55.5,694V699M55.5,704V709M55.5,714V719M55.5,724V729M55.5,734V739M55.5,744V749M55.5,754V758M55.5,761V766M55.5,771V776M55.5,781V786M55.5,791V796M55.5,801V806M55.5,811V816M55.5,821V826M55.5,831V836M55.5,841V846M55.5,851V856M55.5,861V866M55.5,871V875M55.5,876V881M55.5,886V891M55.5,896V901M55.5,906V911M55.5,916V921M55.5,926V931M55.5,936V941M55.5,946V951M55.5,956V961M55.5,966V971M55.5,976V981M55.5,986V991" stroke="#3a3a3a" stroke-width="1" fill="none" shape-rendering="crispEdges"/></svg>
<div id="labels" class="tl"><span class="t" style="left:1718.48px;top:86.25px;font-size:13px;font-family:'DejaVu Sans Condensed','DejaVu Sans','Liberation Sans',sans-serif;color:#000000;transform:scaleX(1.0200);text-shadow:1px 1px 0 #000">30 V</span><span class="t" style="left:1718.48px;top:109.25px;font-size:13px;font-family:'DejaVu Sans Condensed','DejaVu Sans','Liberation Sans',sans-serif;color:#000000;transform:scaleX(1.0200);text-shadow:1px 1px 0 #000">20 V</span><span class="t" style="left:1718.48px;top:132.25px;font-size:13px;font-family:'DejaVu Sans Condensed','DejaVu Sans','Liberation Sans',sans-serif;color:#000000;transform:scaleX(1.0200);text-shadow:1px 1px 0 #000">10 V</span><span class="t" style="left:1726.06px;top:155.25px;font-size:13px;font-family:'DejaVu Sans Condensed','DejaVu Sans','Liberation Sans',sans-serif;color:#000000;transform:scaleX(1.0200);text-shadow:1px 1px 0 #000">0 V</span><span class="t" style="left:1707.10px;top:183.25px;font-size:13px;font-family:'DejaVu Sans Condensed','DejaVu Sans','Liberation Sans',sans-serif;color:#1cc4cc;transform:scaleX(1.0200);text-shadow:1px 1px 0 #000">1.25 V</span><span class="t" style="left:1699.27px;top:206.25px;font-size:13px;font-family:'DejaVu Sans Condensed','DejaVu Sans','Liberation Sans',sans-serif;color:#1cc4cc;transform:scaleX(1.0200);text-shadow:1px 1px 0 #000">750 mV</span><span class="t" style="left:1699.27px;top:229.25px;font-size:13px;font-family:'DejaVu Sans Condensed','DejaVu Sans','Liberation Sans',sans-serif;color:#1cc4cc;transform:scaleX(1.0200);text-shadow:1px 1px 0 #000">250 mV</span><span class="t" style="left:1694.96px;top:252.25px;font-size:13px;font-family:'DejaVu Sans Condensed','DejaVu Sans','Liberation Sans',sans-serif;color:#1cc4cc;transform:scaleX(1.0200);text-shadow:1px 1px 0 #000">-250 mV</span><span class="t" style="left:1694.96px;top:275.25px;font-size:13px;font-family:'DejaVu Sans Condensed','DejaVu Sans','Liberation Sans',sans-serif;color:#1cc4cc;transform:scaleX(1.0200);text-shadow:1px 1px 0 #000">-750 mV</span><span class="t" style="left:1707.10px;top:297.25px;font-size:13px;font-family:'DejaVu Sans Condensed','DejaVu Sans','Liberation Sans',sans-serif;color:#e2264c;transform:scaleX(1.0200);text-shadow:1px 1px 0 #000">1.80 V</span><span class="t" style="left:1699.27px;top:320.25px;font-size:13px;font-family:'DejaVu Sans Condensed','DejaVu Sans','Liberation Sans',sans-serif;color:#e2264c;transform:scaleX(1.0200);text-shadow:1px 1px 0 #000">900 mV</span><span class="t" style="left:1726.06px;top:343.25px;font-size:13px;font-family:'DejaVu Sans Condensed','DejaVu Sans','Liberation Sans',sans-serif;color:#e2264c;transform:scaleX(1.0200);text-shadow:1px 1px 0 #000">0 V</span><span class="t" style="left:1694.96px;top:366.25px;font-size:13px;font-family:'DejaVu Sans Condensed','DejaVu Sans','Liberation Sans',sans-serif;color:#e2264c;transform:scaleX(1.0200);text-shadow:1px 1px 0 #000">-900 mV</span><span class="t" style="left:1702.79px;top:389.25px;font-size:13px;font-family:'DejaVu Sans Condensed','DejaVu Sans','Liberation Sans',sans-serif;color:#e2264c;transform:scaleX(1.0200);text-shadow:1px 1px 0 #000">-1.80 V</span><span class="t" style="left:1726.06px;top:414.25px;font-size:13px;font-family:'DejaVu Sans Condensed','DejaVu Sans','Liberation Sans',sans-serif;color:#7cc126;transform:scaleX(1.0200);text-shadow:1px 1px 0 #000">1 V</span><span class="t" style="left:1699.27px;top:437.25px;font-size:13px;font-family:'DejaVu Sans Condensed','DejaVu Sans','Liberation Sans',sans-serif;color:#7cc126;transform:scaleX(1.0200);text-shadow:1px 1px 0 #000">600 mV</span><span class="t" style="left:1699.27px;top:460.25px;font-size:13px;font-family:'DejaVu Sans Condensed','DejaVu Sans','Liberation Sans',sans-serif;color:#7cc126;transform:scaleX(1.0200);text-shadow:1px 1px 0 #000">200 mV</span><span class="t" style="left:1694.96px;top:483.25px;font-size:13px;font-family:'DejaVu Sans Condensed','DejaVu Sans','Liberation Sans',sans-serif;color:#7cc126;transform:scaleX(1.0200);text-shadow:1px 1px 0 #000">-200 mV</span><span class="t" style="left:1694.96px;top:506.25px;font-size:13px;font-family:'DejaVu Sans Condensed','DejaVu Sans','Liberation Sans',sans-serif;color:#7cc126;transform:scaleX(1.0200);text-shadow:1px 1px 0 #000">-600 mV</span><span class="t" style="left:1726.06px;top:531.25px;font-size:13px;font-family:'DejaVu Sans Condensed','DejaVu Sans','Liberation Sans',sans-serif;color:#f7931e;transform:scaleX(1.0200);text-shadow:1px 1px 0 #000">4 V</span><span class="t" style="left:1726.06px;top:554.25px;font-size:13px;font-family:'DejaVu Sans Condensed','DejaVu Sans','Liberation Sans',sans-serif;color:#f7931e;transform:scaleX(1.0200);text-shadow:1px 1px 0 #000">2 V</span><span class="t" style="left:1726.06px;top:577.25px;font-size:13px;font-family:'DejaVu Sans Condensed','DejaVu Sans','Liberation Sans',sans-serif;color:#f7931e;transform:scaleX(1.0200);text-shadow:1px 1px 0 #000">0 V</span><span class="t" style="left:1721.76px;top:600.25px;font-size:13px;font-family:'DejaVu Sans Condensed','DejaVu Sans','Liberation Sans',sans-serif;color:#f7931e;transform:scaleX(1.0200);text-shadow:1px 1px 0 #000">-2 V</span><span class="t" style="left:1721.76px;top:623.25px;font-size:13px;font-family:'DejaVu Sans Condensed','DejaVu Sans','Liberation Sans',sans-serif;color:#f7931e;transform:scaleX(1.0200);text-shadow:1px 1px 0 #000">-4 V</span><span class="t" style="left:1726.06px;top:648.25px;font-size:13px;font-family:'DejaVu Sans Condensed','DejaVu Sans','Liberation Sans',sans-serif;color:#2222aa;transform:scaleX(1.0200);text-shadow:1px 1px 0 #000">6 V</span><span class="t" style="left:1707.10px;top:671.25px;font-size:13px;font-family:'DejaVu Sans Condensed','DejaVu Sans','Liberation Sans',sans-serif;color:#2222aa;transform:scaleX(1.0200);text-shadow:1px 1px 0 #000">4.50 V</span><span class="t" style="left:1726.06px;top:694.25px;font-size:13px;font-family:'DejaVu Sans Condensed','DejaVu Sans','Liberation Sans',sans-serif;color:#2222aa;transform:scaleX(1.0200);text-shadow:1px 1px 0 #000">3 V</span><span class="t" style="left:1707.10px;top:717.25px;font-size:13px;font-family:'DejaVu Sans Condensed','DejaVu Sans','Liberation Sans',sans-serif;color:#2222aa;transform:scaleX(1.0200);text-shadow:1px 1px 0 #000">1.50 V</span><span class="t" style="left:1726.06px;top:740.25px;font-size:13px;font-family:'DejaVu Sans Condensed','DejaVu Sans','Liberation Sans',sans-serif;color:#2222aa;transform:scaleX(1.0200);text-shadow:1px 1px 0 #000">0 V</span><span class="t" style="left:1672.71px;top:765.25px;font-size:13px;font-family:'DejaVu Sans Condensed','DejaVu Sans','Liberation Sans',sans-serif;color:#e8891c;transform:scaleX(1.0200);text-shadow:1px 1px 0 #000">589.947 mT</span><span class="t" style="left:1672.71px;top:788.25px;font-size:13px;font-family:'DejaVu Sans Condensed','DejaVu Sans','Liberation Sans',sans-serif;color:#e8891c;transform:scaleX(1.0200);text-shadow:1px 1px 0 #000">442.460 mT</span><span class="t" style="left:1672.71px;top:811.25px;font-size:13px;font-family:'DejaVu Sans Condensed','DejaVu Sans','Liberation Sans',sans-serif;color:#e8891c;transform:scaleX(1.0200);text-shadow:1px 1px 0 #000">294.973 mT</span><span class="t" style="left:1672.71px;top:834.25px;font-size:13px;font-family:'DejaVu Sans Condensed','DejaVu Sans','Liberation Sans',sans-serif;color:#e8891c;transform:scaleX(1.0200);text-shadow:1px 1px 0 #000">147.487 mT</span><span class="t" style="left:1726.06px;top:857.25px;font-size:13px;font-family:'DejaVu Sans Condensed','DejaVu Sans','Liberation Sans',sans-serif;color:#e8891c;transform:scaleX(1.0200);text-shadow:1px 1px 0 #000">0 T</span><span class="t" style="left:1669.84px;top:880.25px;font-size:13px;font-family:'DejaVu Sans Condensed','DejaVu Sans','Liberation Sans',sans-serif;color:#6a2080;transform:scaleX(1.0200);text-shadow:1px 1px 0 #000">6.143180 kA</span><span class="t" style="left:1669.84px;top:903.25px;font-size:13px;font-family:'DejaVu Sans Condensed','DejaVu Sans','Liberation Sans',sans-serif;color:#6a2080;transform:scaleX(1.0200);text-shadow:1px 1px 0 #000">4.607385 kA</span><span class="t" style="left:1669.84px;top:926.25px;font-size:13px;font-family:'DejaVu Sans Condensed','DejaVu Sans','Liberation Sans',sans-serif;color:#6a2080;transform:scaleX(1.0200);text-shadow:1px 1px 0 #000">3.071590 kA</span><span class="t" style="left:1669.84px;top:949.25px;font-size:13px;font-family:'DejaVu Sans Condensed','DejaVu Sans','Liberation Sans',sans-serif;color:#6a2080;transform:scaleX(1.0200);text-shadow:1px 1px 0 #000">1.535795 kA</span><span class="t" style="left:1726.06px;top:972.25px;font-size:13px;font-family:'DejaVu Sans Condensed','DejaVu Sans','Liberation Sans',sans-serif;color:#6a2080;transform:scaleX(1.0200);text-shadow:1px 1px 0 #000">0 A</span><span class="t" style="left:47.21px;top:740.50px;font-size:13.5px;font-family:'DejaVu Sans Condensed','DejaVu Sans','Liberation Sans',sans-serif;color:#5a5a5a;transform:scaleX(1.0000);text-shadow:1px 1px 0 #000">0 s</span><span class="t" style="left:210.34px;top:740.50px;font-size:13.5px;font-family:'DejaVu Sans Condensed','DejaVu Sans','Liberation Sans',sans-serif;color:#5a5a5a;transform:scaleX(1.0000);text-shadow:1px 1px 0 #000">4.5 ms</span><span class="t" style="left:390.96px;top:740.50px;font-size:13.5px;font-family:'DejaVu Sans Condensed','DejaVu Sans','Liberation Sans',sans-serif;color:#5a5a5a;transform:scaleX(1.0000);text-shadow:1px 1px 0 #000">9 ms</span><span class="t" style="left:555.64px;top:740.50px;font-size:13.5px;font-family:'DejaVu Sans Condensed','DejaVu Sans','Liberation Sans',sans-serif;color:#5a5a5a;transform:scaleX(1.0000);text-shadow:1px 1px 0 #000">13.5 ms</span><span class="t" style="left:736.27px;top:740.50px;font-size:13.5px;font-family:'DejaVu Sans Condensed','DejaVu Sans','Liberation Sans',sans-serif;color:#5a5a5a;transform:scaleX(1.0000);text-shadow:1px 1px 0 #000">18 ms</span><span class="t" style="left:905.81px;top:740.50px;font-size:13.5px;font-family:'DejaVu Sans Condensed','DejaVu Sans','Liberation Sans',sans-serif;color:#5a5a5a;transform:scaleX(1.0000);text-shadow:1px 1px 0 #000">22.5 ms</span><span class="t" style="left:1086.44px;top:740.50px;font-size:13.5px;font-family:'DejaVu Sans Condensed','DejaVu Sans','Liberation Sans',sans-serif;color:#5a5a5a;transform:scaleX(1.0000);text-shadow:1px 1px 0 #000">27 ms</span><span class="t" style="left:1255.48px;top:740.50px;font-size:13.5px;font-family:'DejaVu Sans Condensed','DejaVu Sans','Liberation Sans',sans-serif;color:#5a5a5a;transform:scaleX(1.0000);text-shadow:1px 1px 0 #000">31.5 ms</span><span class="t" style="left:1436.11px;top:740.50px;font-size:13.5px;font-family:'DejaVu Sans Condensed','DejaVu Sans','Liberation Sans',sans-serif;color:#5a5a5a;transform:scaleX(1.0000);text-shadow:1px 1px 0 #000">36 ms</span><span class="t" style="left:1605.15px;top:740.50px;font-size:13.5px;font-family:'DejaVu Sans Condensed','DejaVu Sans','Liberation Sans',sans-serif;color:#5a5a5a;transform:scaleX(1.0000);text-shadow:1px 1px 0 #000">40.5 ms</span><span class="t" style="left:101.24px;top:104.75px;font-size:19px;font-family:'DejaVu Sans','Liberation Sans',sans-serif;color:#000000;transform:scaleX(0.9613);text-shadow:1px 1px 0 rgba(0,0,0,.6)">U_loop,coil</span><span class="t" style="left:100.97px;top:221.75px;font-size:19px;font-family:'DejaVu Sans Condensed','DejaVu Sans','Liberation Sans',sans-serif;color:#1cc4cc;transform:scaleX(1.0288);text-shadow:1px 1px 0 rgba(0,0,0,.6)">U_Bt,coil</span><span class="t" style="left:53.96px;top:338.75px;font-size:19px;font-family:'DejaVu Sans Condensed','DejaVu Sans','Liberation Sans',sans-serif;color:#e2264c;transform:scaleX(1.0391);text-shadow:1px 1px 0 rgba(0,0,0,.6)">U_Rog,coil</span><span class="t" style="left:101.04px;top:455.75px;font-size:19px;font-family:'DejaVu Sans','Liberation Sans',sans-serif;color:#7cc126;transform:scaleX(0.9623);text-shadow:1px 1px 0 rgba(0,0,0,.6)">U_Photod</span><span class="t" style="left:52.85px;top:572.75px;font-size:19px;font-family:'DejaVu Sans Condensed','DejaVu Sans','Liberation Sans',sans-serif;color:#f7931e;transform:scaleX(1.0464);text-shadow:1px 1px 0 rgba(0,0,0,.6)">U_Diamagn</span><span class="t" style="left:102.32px;top:689.75px;font-size:19px;font-family:'DejaVu Sans Condensed','DejaVu Sans','Liberation Sans',sans-serif;color:#2222aa;transform:scaleX(1.0174);text-shadow:1px 1px 0 rgba(0,0,0,.6)">Trigger</span><span class="t" style="left:52.88px;top:849.75px;font-size:19px;font-family:'DejaVu Sans Condensed','DejaVu Sans','Liberation Sans',sans-serif;color:#e8891c;transform:scaleX(1.0163);text-shadow:1px 1px 0 rgba(0,0,0,.6)">B_t</span><span class="t" style="left:53.07px;top:967.75px;font-size:19px;font-family:'DejaVu Sans','Liberation Sans',sans-serif;color:#6a2080;transform:scaleX(0.9347);text-shadow:1px 1px 0 rgba(0,0,0,.6)">I_p</span></div>
<svg class="ov" viewBox="0 0 1920 1080"><path d="M45,57.3H66L55.5,67.8Z" fill="#f7901e"/>
<path d="M10,103.2H77.5L83.5,115.5L77.5,127.8H10Q7,127.8 7,124.8V106.2Q7,103.2 10,103.2Z" fill="#e4e4e4" stroke="#222" stroke-width="2" stroke-linejoin="round"/><path d="M33,103.2V127.8" stroke="#222" stroke-width="2"/>
<path d="M10,220.2H77.5L83.5,232.5L77.5,244.8H10Q7,244.8 7,241.8V223.2Q7,220.2 10,220.2Z" fill="#e6f8f8" stroke="#1cc4cc" stroke-width="2" stroke-linejoin="round"/><path d="M33,220.2V244.8" stroke="#1cc4cc" stroke-width="2"/>
<path d="M9.5,337.7H29.5Q31,337.7 32,338.7L41.6,349.9L32,361.09999999999997Q31,362.09999999999997 29.5,362.09999999999997H9.5Q6.7,362.09999999999997 6.7,359.29999999999995V340.5Q6.7,337.7 9.5,337.7Z" fill="#fde6e9" stroke="#f0808e" stroke-width="1.3" stroke-linejoin="round"/>
<path d="M10,454.2H77.5L83.5,466.5L77.5,478.8H10Q7,478.8 7,475.8V457.2Q7,454.2 10,454.2Z" fill="#f1f8e6" stroke="#7cc126" stroke-width="2" stroke-linejoin="round"/><path d="M33,454.2V478.8" stroke="#7cc126" stroke-width="2"/>
<path d="M9.5,571.8H29.5Q31,571.8 32,572.8L41.6,584L32,595.2Q31,596.2 29.5,596.2H9.5Q6.7,596.2 6.7,593.4000000000001V574.5999999999999Q6.7,571.8 9.5,571.8Z" fill="#fdf1e6" stroke="#f99c40" stroke-width="1.3" stroke-linejoin="round"/>
<path d="M10,688.2H77.5L83.5,700.5L77.5,712.8H10Q7,712.8 7,709.8V691.2Q7,688.2 10,688.2Z" fill="#e2e2f4" stroke="#000" stroke-width="2" stroke-linejoin="round"/><path d="M10,688.2H33V712.8H10Q7,712.8 7,709.8V691.2Q7,688.2 10,688.2Z" fill="#2626c0" stroke="#000" stroke-width="2"/><path d="M33,688.2V712.8" stroke="#000" stroke-width="2"/>
<path d="M9.5,851.4H29.5Q31,851.4 32,852.4L41.6,863.6L32,874.8000000000001Q31,875.8000000000001 29.5,875.8000000000001H9.5Q6.7,875.8000000000001 6.7,873.0000000000001V854.1999999999999Q6.7,851.4 9.5,851.4Z" fill="#fdeedd" stroke="#f0a050" stroke-width="1.3" stroke-linejoin="round"/>
<path d="M9.5,965.3H29.5Q31,965.3 32,966.3L41.6,977.5L32,988.7Q31,989.7 29.5,989.7H9.5Q6.7,989.7 6.7,986.9000000000001V968.0999999999999Q6.7,965.3 9.5,965.3Z" fill="#f1e8f5" stroke="#8a4aa8" stroke-width="1.3" stroke-linejoin="round"/>
<rect x="3" y="875" width="45" height="2" fill="#565656"/><rect x="3" y="877" width="45" height="2" fill="#fff"/>
<path d="M46.2,644.1H63.8V662.6H58.6L55.4,668.2L52.2,662.6H46.2Z" fill="#000" stroke="#f7901e" stroke-width="2.4" stroke-linejoin="miter"/>
<path d="M1729.6,700.45L1742,690.2V699H1751V702H1742V710.7Z" fill="#2424be"/>
<path d="M1709.5,64.5H1742Q1745,64.5 1745,67.5V97.5Q1745,101.5 1742.3,98.8Z" fill="#555" stroke="#222" stroke-width="1" stroke-linejoin="round"/>
<circle cx="1737.7" cy="71.7" r="3.5" fill="none" stroke="#a8a8a8" stroke-width="1.5"/><path d="M1734.6,74.8L1728.2,80.8" stroke="#a8a8a8" stroke-width="2.4" stroke-linecap="round"/>
<path d="M593,36.5H586.5V52.5H593" fill="none" stroke="#e0e0e0" stroke-width="1"/><path d="M1160,36.5H1166.5V52.5H1160" fill="none" stroke="#e0e0e0" stroke-width="1"/>
<rect x="587" y="44" width="579" height="2" fill="#b0b0b0"/>
<path d="M596,33H611L603.5,38Z" fill="#f7901e"/>
<path d="M597.5,40.5H609.5V51.5H606L603.5,56L601,51.5H597.5Z" fill="#000" stroke="#f7901e" stroke-width="1.6" stroke-linejoin="round"/><text transform="translate(11.20 119.00) scale(0.9650 1)" font-family="DejaVu Sans Condensed,DejaVu Sans,Liberation Sans,sans-serif" font-size="11.7" fill="#0c0c0c" stroke="#0c0c0c" stroke-width="0.3">C 1</text><text transform="translate(45.20 119.00) scale(0.9751 1)" font-family="DejaVu Sans Condensed,DejaVu Sans,Liberation Sans,sans-serif" font-size="11.7" fill="#0c0c0c" stroke="#0c0c0c" stroke-width="0.3">20 V</text><text transform="translate(11.20 236.00) scale(0.9890 1)" font-family="DejaVu Sans Condensed,DejaVu Sans,Liberation Sans,sans-serif" font-size="11.7" fill="#0c0c0c" stroke="#0c0c0c" stroke-width="0.3">C 2</text><text transform="translate(35.60 236.00) scale(1.0061 1)" font-family="DejaVu Sans Condensed,DejaVu Sans,Liberation Sans,sans-serif" font-size="11.7" fill="#0c0c0c" stroke="#0c0c0c" stroke-width="0.3">300 mV</text><text transform="translate(14.80 353.00) scale(1.0310 1)" font-family="DejaVu Sans Condensed,DejaVu Sans,Liberation Sans,sans-serif" font-size="11.7" fill="#e8596b" stroke="#e8596b" stroke-width="0.3">C 3</text><text transform="translate(11.20 470.00) scale(0.9331 1)" font-family="DejaVu Sans Condensed,DejaVu Sans,Liberation Sans,sans-serif" font-size="11.7" fill="#0c0c0c" stroke="#0c0c0c" stroke-width="0.3">C 4</text><text transform="translate(35.60 470.00) scale(1.0061 1)" font-family="DejaVu Sans Condensed,DejaVu Sans,Liberation Sans,sans-serif" font-size="11.7" fill="#0c0c0c" stroke="#0c0c0c" stroke-width="0.3">200 mV</text><text transform="translate(14.80 586.90) scale(1.0430 1)" font-family="DejaVu Sans Condensed,DejaVu Sans,Liberation Sans,sans-serif" font-size="11.7" fill="#0c0c0c" stroke="#0c0c0c" stroke-width="0.3">C 5</text><text transform="translate(11.20 704.00) scale(0.9331 1)" font-family="DejaVu Sans Condensed,DejaVu Sans,Liberation Sans,sans-serif" font-size="11.7" fill="#fff" stroke="#fff" stroke-width="0.3">C 6</text><text transform="translate(47.80 704.00) scale(1.0096 1)" font-family="DejaVu Sans Condensed,DejaVu Sans,Liberation Sans,sans-serif" font-size="11.7" fill="#2a2ab4" stroke="#2a2ab4" stroke-width="0.3">3 V</text><text transform="translate(12.20 866.70) scale(1.0000 1)" font-family="DejaVu Sans,Liberation Sans,sans-serif" font-size="11.7" fill="#0c0c0c" stroke="#0c0c0c" stroke-width="0.3">M 1</text><text transform="translate(12.20 980.60) scale(1.0000 1)" font-family="DejaVu Sans,Liberation Sans,sans-serif" font-size="11.7" fill="#7a35a0" stroke="#7a35a0" stroke-width="0.3">M 2</text><text transform="translate(50.70 659.30) scale(1.0111 1)" font-family="DejaVu Sans Condensed,DejaVu Sans,Liberation Sans,sans-serif" font-size="14.5" fill="#f7901e" font-weight="bold">T</text><text transform="translate(600.20 50.00) scale(0.9429 1)" font-family="DejaVu Sans,Liberation Sans,sans-serif" font-size="9.5" fill="#f7901e" font-weight="bold" stroke="#f7901e" stroke-width="0.3">T</text></svg>
</div>
<div class="abs" style="left:1760px;top:501.8px;width:4px;height:4px;border-radius:2px;background:#c6c6c6"></div>
<div class="abs" style="left:1760px;top:510.3px;width:4px;height:4px;border-radius:2px;background:#c6c6c6"></div>
<div class="abs" style="left:1760px;top:518.8px;width:4px;height:4px;border-radius:2px;background:#c6c6c6"></div>
<div id="side">
<div class="btn" style="left:8px;top:24px;width:63px;height:37px"></div>
<div class="btn" style="left:80px;top:24px;width:63px;height:37px"></div>
<div class="btn" style="left:8px;top:70px;width:63px;height:37px"></div>
<div class="btn" style="left:80px;top:70px;width:63px;height:37px"></div>
<div class="btn" style="left:8px;top:116px;width:63px;height:37px"></div>
<div class="btn" style="left:80px;top:116px;width:63px;height:37px"></div>
<div class="btn" style="left:8px;top:166px;width:63px;height:37px"></div>
<div class="btn" style="left:80px;top:166px;width:63px;height:37px"></div>
<div class="hr" style="left:3px;top:159px;width:144px"></div><div class="hr" style="left:3px;top:211px;width:144px"></div>
<div class="tl" style="width:150px;height:960px"><span class="t" style="left:32.00px;top:2.00px;font-size:14.5px;font-family:'DejaVu Sans','Liberation Sans',sans-serif;color:#ececec;transform:scaleX(0.9682);font-weight:bold">Add New...</span><span class="t" style="left:14.40px;top:35.00px;font-size:14.5px;font-family:'DejaVu Sans Condensed','DejaVu Sans','Liberation Sans',sans-serif;color:#f0f0f0;transform:scaleX(1.0205);-webkit-text-stroke:0.12px #f0f0f0">Cursors</span><span class="t" style="left:86.10px;top:35.00px;font-size:14.5px;font-family:'DejaVu Sans','Liberation Sans',sans-serif;color:#f0f0f0;transform:scaleX(0.9682);-webkit-text-stroke:0.12px #f0f0f0">Callout</span><span class="t" style="left:9.44px;top:81.00px;font-size:14.5px;font-family:'DejaVu Sans','Liberation Sans',sans-serif;color:#f0f0f0;transform:scaleX(0.9637);-webkit-text-stroke:0.12px #f0f0f0">Measure</span><span class="t" style="left:88.60px;top:81.00px;font-size:14.5px;font-family:'DejaVu Sans Condensed','DejaVu Sans','Liberation Sans',sans-serif;color:#f0f0f0;transform:scaleX(1.0175);-webkit-text-stroke:0.12px #f0f0f0">Search</span><span class="t" style="left:14.87px;top:119.00px;font-size:14.5px;font-family:'DejaVu Sans Condensed','DejaVu Sans','Liberation Sans',sans-serif;color:#f0f0f0;transform:scaleX(1.0250);-webkit-text-stroke:0.12px #f0f0f0">Results</span><span class="t" style="left:22.73px;top:135.00px;font-size:14.5px;font-family:'DejaVu Sans Condensed','DejaVu Sans','Liberation Sans',sans-serif;color:#f0f0f0;transform:scaleX(1.0329);-webkit-text-stroke:0.12px #f0f0f0">Table</span><span class="t" style="left:96.48px;top:127.00px;font-size:14.5px;font-family:'DejaVu Sans','Liberation Sans',sans-serif;color:#f0f0f0;transform:scaleX(1.0209);-webkit-text-stroke:0.12px #f0f0f0">Plot</span><span class="t" style="left:85.16px;top:177.00px;font-size:14.5px;font-family:'DejaVu Sans','Liberation Sans',sans-serif;color:#f0f0f0;transform:scaleX(1.0381);-webkit-text-stroke:0.12px #f0f0f0">More...</span></div>
<svg class="abs" style="left:20px;top:165px" width="40" height="36" viewBox="1790 195 40 36"><rect x="1798" y="202.7" width="22" height="19.5" fill="none" stroke="#cfcfcf" stroke-width="1.6" stroke-dasharray="3 2.2"/><circle cx="1811" cy="210.8" r="4.3" fill="#2e2e30" stroke="#cfcfcf" stroke-width="1.5"/><path d="M1807.7,214.2L1803,218" stroke="#cfcfcf" stroke-width="2.2" stroke-linecap="round"/><path d="M1815,216.5L1823.5,222.5L1820,223L1822,227L1820.3,227.8L1818.4,223.8L1816,226.5Z" fill="#bdbdbd"/></svg>
</div>
<div id="bottom">
<div class="chb" style="left:3.0px;top:984px;height:94px"><div class="chh" style="background:#1e1e1e;height:19px"></div><div class="chl"></div><div class="chw"></div></div>
<div class="chb" style="left:98.0px;top:984px;height:94px"><div class="chh" style="background:#1d4144;height:19px"></div><div class="chl"></div><div class="chw"></div></div>
<div class="chb" style="left:193.0px;top:984px;height:94px"><div class="chh" style="background:#46262b;height:19px"></div><div class="chl"></div><div class="chw"></div></div>
<div class="chb" style="left:288.0px;top:1003px;height:75px"><div class="chh" style="background:#3a4326;height:19px"></div><div class="chl2"></div></div>
<div class="chb" style="left:383.0px;top:1003px;height:75px"><div class="chh" style="background:#4b3423;height:19px"></div><div class="chl2"></div></div>
<div class="chb" style="left:478.0px;top:984px;height:94px"><div class="chh" style="background:#2828c0;height:19px"></div><div class="chl"></div><div class="chw"></div></div>
<div class="chb" style="left:573.0px;top:984px;height:94px"><div class="chh" style="background:#4a3421;height:19px"></div><div class="chl"></div><div class="chw"></div></div>
<div class="chb" style="left:668.0px;top:984px;height:94px"><div class="chh" style="background:#2e2132;height:19px"></div><div class="chl"></div><div class="chw"></div></div>
<svg class="ov" viewBox="0 0 1920 1080"><path d="M4.3,1020.3L11.0,1007.2L17.9,1020.3Z" fill="#fff200" stroke="#34346e" stroke-width="1.3" stroke-linejoin="round"/><path d="M11.0,1010V1018.3" stroke="#8c8c4e" stroke-width="1.5"/><path d="M99.3,1020.3L106.0,1007.2L112.9,1020.3Z" fill="#fff200" stroke="#34346e" stroke-width="1.3" stroke-linejoin="round"/><path d="M106.0,1010V1018.3" stroke="#8c8c4e" stroke-width="1.5"/><path d="M194.3,1020.3L201.0,1007.2L207.9,1020.3Z" fill="#fff200" stroke="#34346e" stroke-width="1.3" stroke-linejoin="round"/><path d="M201.0,1010V1018.3" stroke="#8c8c4e" stroke-width="1.5"/><path d="M479.3,1020.3L486.0,1007.2L492.9,1020.3Z" fill="#fff200" stroke="#34346e" stroke-width="1.3" stroke-linejoin="round"/><path d="M486.0,1010V1018.3" stroke="#8c8c4e" stroke-width="1.5"/><path d="M574.3,1020.3L581.0,1007.2L587.9,1020.3Z" fill="#fff200" stroke="#34346e" stroke-width="1.3" stroke-linejoin="round"/><path d="M581.0,1010V1018.3" stroke="#8c8c4e" stroke-width="1.5"/><path d="M669.3,1020.3L676.0,1007.2L682.9,1020.3Z" fill="#fff200" stroke="#34346e" stroke-width="1.3" stroke-linejoin="round"/><path d="M676.0,1010V1018.3" stroke="#8c8c4e" stroke-width="1.5"/></svg>
<div class="vr" style="left:1118px;top:1000px;height:78px"></div><div class="vr" style="left:1269px;top:1000px;height:78px"></div><div class="vr" style="left:1811px;top:1000px;height:78px"></div>
<div class="btn" style="left:1129px;top:999px;width:40px;height:79px;border-radius:8px"></div><div class="abs" style="left:1133px;top:1007px;width:31px;height:2px;background:#c8242c"></div>
<div class="btn" style="left:1174px;top:999px;width:40px;height:79px;border-radius:8px"></div><div class="abs" style="left:1178px;top:1007px;width:31px;height:2px;background:#c9c9dd"></div>
<div class="btn" style="left:1219px;top:999px;width:40px;height:79px;border-radius:8px"></div><div class="abs" style="left:1223px;top:1007px;width:31px;height:2px;background:#c04ff0"></div>
<div class="ib" style="left:1281px;top:1003px;width:198px;height:75px"><div class="h"></div></div>
<div class="ib" style="left:1486px;top:1003px;width:158px;height:75px"><div class="h"></div></div>
<div class="ib" style="left:1651px;top:1003px;width:148px;height:75px"><div class="h"></div></div>
<div class="abs" style="left:1490.5px;top:1025.5px;width:29px;height:15px;box-sizing:border-box;border:1px solid #000;border-radius:6px;background:#2828c8"></div>
<div class="abs" style="left:1822px;top:999.5px;width:90px;height:35px;box-sizing:border-box;border:1px solid #7a5a58;border-radius:7px;background:#ff1f29"></div>
<div class="abs" style="left:1822px;top:1040.5px;width:90px;height:38px;border-radius:6px;background:#c9c9c9"></div>
<svg class="ov" viewBox="0 0 1920 1080"><path d="M1530,1037.5H1534.5L1542,1027.5H1546.5" fill="none" stroke="#34349a" stroke-width="1.1"/><path d="M1391.8,1063.4H1399.6V1071.5H1397.2L1395.7,1074.4L1394.2,1071.5H1391.8Z" fill="#000" stroke="#f7901e" stroke-width="1.2" stroke-linejoin="round"/></svg>
<div class="tl"><span class="t" style="left:8.70px;top:986.00px;font-size:14.5px;font-family:'DejaVu Sans Condensed','DejaVu Sans','Liberation Sans',sans-serif;color:#f4e53c;transform:scaleX(1.0000)">Ch 1</span><span class="t" style="left:19.70px;top:1006.00px;font-size:14.5px;font-family:'DejaVu Sans','Liberation Sans',sans-serif;color:#fff;transform:scaleX(0.9808)">Clipping</span><span class="t" style="left:7.79px;top:1025.00px;font-size:14.5px;font-family:'DejaVu Sans Condensed','DejaVu Sans','Liberation Sans',sans-serif;color:#111;transform:scaleX(0.9560)">5 V/div</span><span class="t" style="left:7.78px;top:1044.00px;font-size:14.5px;font-family:'DejaVu Sans','Liberation Sans',sans-serif;color:#111;transform:scaleX(0.9740)">1 MΩ</span><span class="t" style="left:8.75px;top:1063.00px;font-size:14.5px;font-family:'DejaVu Sans Condensed','DejaVu Sans','Liberation Sans',sans-serif;color:#111;transform:scaleX(0.9737)">200 kHz</span><span class="t" style="left:74.70px;top:1061.75px;font-size:8px;font-family:'DejaVu Sans Condensed','DejaVu Sans','Liberation Sans',sans-serif;color:#111;transform:scaleX(0.9800);font-weight:bold">B</span><span class="t" style="left:80.10px;top:1065.00px;font-size:8.5px;font-family:'DejaVu Sans Condensed','DejaVu Sans','Liberation Sans',sans-serif;color:#111;transform:scaleX(0.8571);font-weight:bold">w</span><span class="t" style="left:103.70px;top:986.00px;font-size:14.5px;font-family:'DejaVu Sans Condensed','DejaVu Sans','Liberation Sans',sans-serif;color:#27cfdb;transform:scaleX(1.0000)">Ch 2</span><span class="t" style="left:114.70px;top:1006.00px;font-size:14.5px;font-family:'DejaVu Sans','Liberation Sans',sans-serif;color:#fff;transform:scaleX(0.9808)">Clipping</span><span class="t" style="left:103.75px;top:1025.00px;font-size:14.5px;font-family:'DejaVu Sans Condensed','DejaVu Sans','Liberation Sans',sans-serif;color:#111;transform:scaleX(0.9737)">250 mV/div</span><span class="t" style="left:102.78px;top:1044.00px;font-size:14.5px;font-family:'DejaVu Sans','Liberation Sans',sans-serif;color:#111;transform:scaleX(0.9740)">1 MΩ</span><span class="t" style="left:103.75px;top:1063.00px;font-size:14.5px;font-family:'DejaVu Sans Condensed','DejaVu Sans','Liberation Sans',sans-serif;color:#111;transform:scaleX(0.9737)">200 kHz</span><span class="t" style="left:169.70px;top:1061.75px;font-size:8px;font-family:'DejaVu Sans Condensed','DejaVu Sans','Liberation Sans',sans-serif;color:#111;transform:scaleX(0.9800);font-weight:bold">B</span><span class="t" style="left:175.10px;top:1065.00px;font-size:8.5px;font-family:'DejaVu Sans Condensed','DejaVu Sans','Liberation Sans',sans-serif;color:#111;transform:scaleX(0.8571);font-weight:bold">w</span><span class="t" style="left:198.70px;top:986.00px;font-size:14.5px;font-family:'DejaVu Sans Condensed','DejaVu Sans','Liberation Sans',sans-serif;color:#f0f0f0;transform:scaleX(1.0000)">Ch 3</span><span class="t" style="left:209.70px;top:1006.00px;font-size:14.5px;font-family:'DejaVu Sans','Liberation Sans',sans-serif;color:#fff;transform:scaleX(0.9808)">Clipping</span><span class="t" style="left:198.75px;top:1025.00px;font-size:14.5px;font-family:'DejaVu Sans Condensed','DejaVu Sans','Liberation Sans',sans-serif;color:#111;transform:scaleX(0.9724)">450 mV/div</span><span class="t" style="left:197.78px;top:1044.00px;font-size:14.5px;font-family:'DejaVu Sans','Liberation Sans',sans-serif;color:#111;transform:scaleX(0.9740)">1 MΩ</span><span class="t" style="left:198.75px;top:1063.00px;font-size:14.5px;font-family:'DejaVu Sans Condensed','DejaVu Sans','Liberation Sans',sans-serif;color:#111;transform:scaleX(0.9737)">200 kHz</span><span class="t" style="left:264.70px;top:1061.75px;font-size:8px;font-family:'DejaVu Sans Condensed','DejaVu Sans','Liberation Sans',sans-serif;color:#111;transform:scaleX(0.9800);font-weight:bold">B</span><span class="t" style="left:270.10px;top:1065.00px;font-size:8.5px;font-family:'DejaVu Sans Condensed','DejaVu Sans','Liberation Sans',sans-serif;color:#111;transform:scaleX(0.8571);font-weight:bold">w</span><span class="t" style="left:293.70px;top:1005.00px;font-size:14.5px;font-family:'DejaVu Sans Condensed','DejaVu Sans','Liberation Sans',sans-serif;color:#8dd32c;transform:scaleX(1.0000)">Ch 4</span><span class="t" style="left:293.75px;top:1025.00px;font-size:14.5px;font-family:'DejaVu Sans Condensed','DejaVu Sans','Liberation Sans',sans-serif;color:#111;transform:scaleX(0.9737)">200 mV/div</span><span class="t" style="left:292.78px;top:1044.00px;font-size:14.5px;font-family:'DejaVu Sans','Liberation Sans',sans-serif;color:#111;transform:scaleX(0.9740)">1 MΩ</span><span class="t" style="left:293.75px;top:1063.00px;font-size:14.5px;font-family:'DejaVu Sans Condensed','DejaVu Sans','Liberation Sans',sans-serif;color:#111;transform:scaleX(0.9737)">200 kHz</span><span class="t" style="left:359.70px;top:1061.75px;font-size:8px;font-family:'DejaVu Sans Condensed','DejaVu Sans','Liberation Sans',sans-serif;color:#111;transform:scaleX(0.9800);font-weight:bold">B</span><span class="t" style="left:365.10px;top:1065.00px;font-size:8.5px;font-family:'DejaVu Sans Condensed','DejaVu Sans','Liberation Sans',sans-serif;color:#111;transform:scaleX(0.8571);font-weight:bold">w</span><span class="t" style="left:388.70px;top:1005.00px;font-size:14.5px;font-family:'DejaVu Sans Condensed','DejaVu Sans','Liberation Sans',sans-serif;color:#f7941e;transform:scaleX(1.0000)">Ch 5</span><span class="t" style="left:387.79px;top:1025.00px;font-size:14.5px;font-family:'DejaVu Sans Condensed','DejaVu Sans','Liberation Sans',sans-serif;color:#111;transform:scaleX(0.9582)">1 V/div</span><span class="t" style="left:387.78px;top:1044.00px;font-size:14.5px;font-family:'DejaVu Sans','Liberation Sans',sans-serif;color:#111;transform:scaleX(0.9740)">1 MΩ</span><span class="t" style="left:388.75px;top:1063.00px;font-size:14.5px;font-family:'DejaVu Sans Condensed','DejaVu Sans','Liberation Sans',sans-serif;color:#111;transform:scaleX(0.9737)">200 kHz</span><span class="t" style="left:454.70px;top:1061.75px;font-size:8px;font-family:'DejaVu Sans Condensed','DejaVu Sans','Liberation Sans',sans-serif;color:#111;transform:scaleX(0.9800);font-weight:bold">B</span><span class="t" style="left:460.10px;top:1065.00px;font-size:8.5px;font-family:'DejaVu Sans Condensed','DejaVu Sans','Liberation Sans',sans-serif;color:#111;transform:scaleX(0.8571);font-weight:bold">w</span><span class="t" style="left:483.70px;top:986.00px;font-size:14.5px;font-family:'DejaVu Sans Condensed','DejaVu Sans','Liberation Sans',sans-serif;color:#ffffff;transform:scaleX(1.0000)">Ch 6</span><span class="t" style="left:494.70px;top:1006.00px;font-size:14.5px;font-family:'DejaVu Sans','Liberation Sans',sans-serif;color:#fff;transform:scaleX(0.9808)">Clipping</span><span class="t" style="left:482.77px;top:1025.00px;font-size:14.5px;font-family:'DejaVu Sans Condensed','DejaVu Sans','Liberation Sans',sans-serif;color:#111;transform:scaleX(0.9788)">750 mV/div</span><span class="t" style="left:482.78px;top:1044.00px;font-size:14.5px;font-family:'DejaVu Sans','Liberation Sans',sans-serif;color:#111;transform:scaleX(0.9740)">1 MΩ</span><span class="t" style="left:483.75px;top:1063.00px;font-size:14.5px;font-family:'DejaVu Sans Condensed','DejaVu Sans','Liberation Sans',sans-serif;color:#111;transform:scaleX(0.9737)">200 kHz</span><span class="t" style="left:549.70px;top:1061.75px;font-size:8px;font-family:'DejaVu Sans Condensed','DejaVu Sans','Liberation Sans',sans-serif;color:#111;transform:scaleX(0.9800);font-weight:bold">B</span><span class="t" style="left:555.10px;top:1065.00px;font-size:8.5px;font-family:'DejaVu Sans Condensed','DejaVu Sans','Liberation Sans',sans-serif;color:#111;transform:scaleX(0.8571);font-weight:bold">w</span><span class="t" style="left:577.70px;top:986.00px;font-size:14.5px;font-family:'DejaVu Sans','Liberation Sans',sans-serif;color:#f0952c;transform:scaleX(0.9962)">Math 1</span><span class="t" style="left:588.94px;top:1006.00px;font-size:14.5px;font-family:'DejaVu Sans','Liberation Sans',sans-serif;color:#fff;transform:scaleX(0.9628)">Empty i...</span><span class="t" style="left:578.40px;top:1025.00px;font-size:14.5px;font-family:'DejaVu Sans Condensed','DejaVu Sans','Liberation Sans',sans-serif;color:#111;transform:scaleX(0.9368);font-weight:bold">73.7 mT/div</span><span class="t" style="left:577.38px;top:1044.00px;font-size:14.5px;font-family:'DejaVu Sans Condensed','DejaVu Sans','Liberation Sans',sans-serif;color:#111;transform:scaleX(1.0188)">Intg(Ch2)...</span><span class="t" style="left:672.69px;top:986.00px;font-size:14.5px;font-family:'DejaVu Sans','Liberation Sans',sans-serif;color:#ffffff;transform:scaleX(1.0129)">Math 2</span><span class="t" style="left:683.94px;top:1006.00px;font-size:14.5px;font-family:'DejaVu Sans','Liberation Sans',sans-serif;color:#fff;transform:scaleX(0.9628)">Empty i...</span><span class="t" style="left:673.40px;top:1025.00px;font-size:14.5px;font-family:'DejaVu Sans Condensed','DejaVu Sans','Liberation Sans',sans-serif;color:#111;transform:scaleX(0.9564);font-weight:bold">767.89 A/...</span><span class="t" style="left:673.40px;top:1044.00px;font-size:14.5px;font-family:'DejaVu Sans Condensed','DejaVu Sans','Liberation Sans',sans-serif;color:#111;transform:scaleX(1.0281)">-Intg(Ch3...</span><span class="t" style="left:1136.15px;top:1021.00px;font-size:14.5px;font-family:'DejaVu Sans Condensed','DejaVu Sans','Liberation Sans',sans-serif;color:#f0f0f0;transform:scaleX(1.0300);-webkit-text-stroke:0.1px #f0f0f0">Add</span><span class="t" style="left:1133.66px;top:1037.00px;font-size:14.5px;font-family:'DejaVu Sans Condensed','DejaVu Sans','Liberation Sans',sans-serif;color:#f0f0f0;transform:scaleX(1.0300);-webkit-text-stroke:0.1px #f0f0f0">New</span><span class="t" style="left:1131.82px;top:1053.00px;font-size:14.5px;font-family:'DejaVu Sans Condensed','DejaVu Sans','Liberation Sans',sans-serif;color:#f0f0f0;transform:scaleX(1.0300);-webkit-text-stroke:0.1px #f0f0f0">Math</span><span class="t" style="left:1181.15px;top:1021.00px;font-size:14.5px;font-family:'DejaVu Sans Condensed','DejaVu Sans','Liberation Sans',sans-serif;color:#f0f0f0;transform:scaleX(1.0300);-webkit-text-stroke:0.1px #f0f0f0">Add</span><span class="t" style="left:1178.66px;top:1037.00px;font-size:14.5px;font-family:'DejaVu Sans Condensed','DejaVu Sans','Liberation Sans',sans-serif;color:#f0f0f0;transform:scaleX(1.0300);-webkit-text-stroke:0.1px #f0f0f0">New</span><span class="t" style="left:1182.44px;top:1053.00px;font-size:14.5px;font-family:'DejaVu Sans Condensed','DejaVu Sans','Liberation Sans',sans-serif;color:#f0f0f0;transform:scaleX(1.0300);-webkit-text-stroke:0.1px #f0f0f0">Ref</span><span class="t" style="left:1226.15px;top:1021.00px;font-size:14.5px;font-family:'DejaVu Sans Condensed','DejaVu Sans','Liberation Sans',sans-serif;color:#f0f0f0;transform:scaleX(1.0300);-webkit-text-stroke:0.1px #f0f0f0">Add</span><span class="t" style="left:1223.66px;top:1037.00px;font-size:14.5px;font-family:'DejaVu Sans Condensed','DejaVu Sans','Liberation Sans',sans-serif;color:#f0f0f0;transform:scaleX(1.0300);-webkit-text-stroke:0.1px #f0f0f0">New</span><span class="t" style="left:1226.01px;top:1053.00px;font-size:14.5px;font-family:'DejaVu Sans Condensed','DejaVu Sans','Liberation Sans',sans-serif;color:#f0f0f0;transform:scaleX(1.0300);-webkit-text-stroke:0.1px #f0f0f0">Bus</span><span class="t" style="left:1285.62px;top:1005.75px;font-size:15px;font-family:'DejaVu Sans','Liberation Sans',sans-serif;color:#fff;transform:scaleX(0.9782)">Horizontal</span><span class="t" style="left:1285.50px;top:1025.00px;font-size:14.5px;font-family:'DejaVu Sans Condensed','DejaVu Sans','Liberation Sans',sans-serif;color:#111;transform:scaleX(0.9419)">4.5 ms/div</span><span class="t" style="left:1391.20px;top:1025.00px;font-size:14.5px;font-family:'DejaVu Sans Condensed','DejaVu Sans','Liberation Sans',sans-serif;color:#111;transform:scaleX(0.9544)">45 ms</span><span class="t" style="left:1285.50px;top:1044.00px;font-size:14.5px;font-family:'DejaVu Sans Condensed','DejaVu Sans','Liberation Sans',sans-serif;color:#111;transform:scaleX(0.9663)">SR: 1 MS/s</span><span class="t" style="left:1391.33px;top:1044.00px;font-size:14.5px;font-family:'DejaVu Sans Condensed','DejaVu Sans','Liberation Sans',sans-serif;color:#111;transform:scaleX(0.9657)">1 µs/pt</span><span class="t" style="left:1284.54px;top:1063.00px;font-size:14.5px;font-family:'DejaVu Sans Condensed','DejaVu Sans','Liberation Sans',sans-serif;color:#111;transform:scaleX(0.9634)">RL: 45 kpts</span><span class="t" style="left:1405.80px;top:1063.00px;font-size:14.5px;font-family:'DejaVu Sans Condensed','DejaVu Sans','Liberation Sans',sans-serif;color:#111;transform:scaleX(1.0149)">3%</span><span class="t" style="left:1393.30px;top:1066.00px;font-size:6.5px;font-family:'DejaVu Sans','Liberation Sans',sans-serif;color:#fff;transform:scaleX(0.9400);font-weight:bold">T</span><span class="t" style="left:1492.03px;top:1005.75px;font-size:15px;font-family:'DejaVu Sans Condensed','DejaVu Sans','Liberation Sans',sans-serif;color:#fff;transform:scaleX(1.0319)">Trigger</span><span class="t" style="left:1500.00px;top:1025.00px;font-size:14.5px;font-family:'DejaVu Sans','Liberation Sans',sans-serif;color:#fff;transform:scaleX(1.0000)">6</span><span class="t" style="left:1556.40px;top:1025.00px;font-size:14.5px;font-family:'DejaVu Sans Condensed','DejaVu Sans','Liberation Sans',sans-serif;color:#111;transform:scaleX(0.9608)">3 V</span><span class="t" style="left:1656.30px;top:1005.75px;font-size:15px;font-family:'DejaVu Sans Condensed','DejaVu Sans','Liberation Sans',sans-serif;color:#fff;transform:scaleX(1.0500)">Acquisition</span><span class="t" style="left:1654.27px;top:1025.00px;font-size:14.5px;font-family:'DejaVu Sans Condensed','DejaVu Sans','Liberation Sans',sans-serif;color:#111;transform:scaleX(1.0342)">Manual,</span><span class="t" style="left:1736.50px;top:1025.00px;font-size:14.5px;font-family:'DejaVu Sans Condensed','DejaVu Sans','Liberation Sans',sans-serif;color:#111;transform:scaleX(0.9519)">Analyze</span><span class="t" style="left:1654.33px;top:1044.00px;font-size:14.5px;font-family:'DejaVu Sans Condensed','DejaVu Sans','Liberation Sans',sans-serif;color:#111;transform:scaleX(0.9748)">High Res: 16 bits</span><span class="t" style="left:1655.30px;top:1063.00px;font-size:14.5px;font-family:'DejaVu Sans Condensed','DejaVu Sans','Liberation Sans',sans-serif;color:#111;transform:scaleX(0.9430)">Single: 1 /1</span><span class="t" style="left:1839.00px;top:1008.50px;font-size:13.5px;font-family:'DejaVu Sans Condensed','DejaVu Sans','Liberation Sans',sans-serif;color:#fff;transform:scaleX(0.9818);font-weight:bold">Stopped</span><span class="t" style="left:1824.50px;top:1041.75px;font-size:15px;font-family:'DejaVu Sans Condensed','DejaVu Sans','Liberation Sans',sans-serif;color:#111;transform:scaleX(0.9670)">28 May 2025</span><span class="t" style="left:1829.60px;top:1058.75px;font-size:15px;font-family:'DejaVu Sans Condensed','DejaVu Sans','Liberation Sans',sans-serif;color:#111;transform:scaleX(0.9862)">6:20:25 PM</span></div>
</div>
</body></html>
